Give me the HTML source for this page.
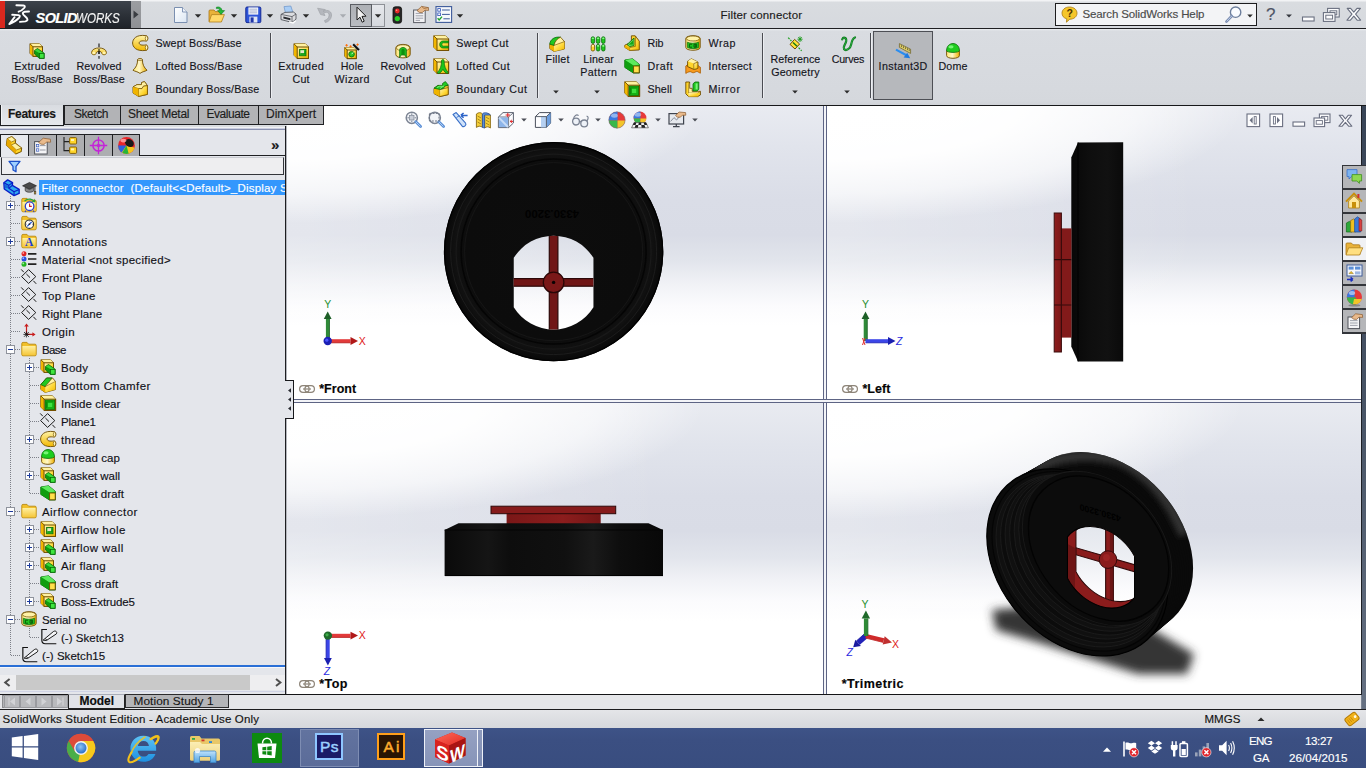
<!DOCTYPE html>
<html lang="en"><head><meta charset="utf-8"><title>Filter connector - SolidWorks</title>
<style>
html,body{margin:0;padding:0;}
body{width:1366px;height:768px;overflow:hidden;position:relative;background:#e3e5ea;font-family:"Liberation Sans",sans-serif;}
.r{position:absolute;display:block;}
.t{position:absolute;white-space:pre;-webkit-text-stroke:0.15px currentColor;font-family:"Liberation Sans",sans-serif;}
</style></head>
<body>
<div class="r" style="left:287px;top:106px;width:1074px;height:588px;background:#fff;"></div>
<div class="r" style="left:287px;top:106px;width:536px;height:293px;background:radial-gradient(ellipse 78% 40% at 0% 0%, #ffffff 0%, rgba(255,255,255,.97) 45%, rgba(255,255,255,.6) 75%, rgba(255,255,255,0) 100%),linear-gradient(to right, rgba(255,255,255,.3) 0%, rgba(255,255,255,.18) 35%, rgba(255,255,255,0) 70%),linear-gradient(to bottom,#e9ebf1 0%,#e1e4ec 14%,#dadde7 32%,#d9dce6 44%,#e2e5ec 53%,#f1f2f6 61%,#fbfbfd 68%,#ffffff 75%,#ffffff 100%);"></div>
<div class="r" style="left:827px;top:106px;width:534px;height:293px;background:radial-gradient(ellipse 78% 40% at 0% 0%, #ffffff 0%, rgba(255,255,255,.97) 45%, rgba(255,255,255,.6) 75%, rgba(255,255,255,0) 100%),linear-gradient(to right, rgba(255,255,255,.3) 0%, rgba(255,255,255,.18) 35%, rgba(255,255,255,0) 70%),linear-gradient(to bottom,#e9ebf1 0%,#e1e4ec 14%,#dadde7 32%,#d9dce6 44%,#e2e5ec 53%,#f1f2f6 61%,#fbfbfd 68%,#ffffff 75%,#ffffff 100%);"></div>
<div class="r" style="left:287px;top:403px;width:536px;height:291px;background:radial-gradient(ellipse 78% 40% at 0% 0%, #ffffff 0%, rgba(255,255,255,.97) 45%, rgba(255,255,255,.6) 75%, rgba(255,255,255,0) 100%),linear-gradient(to right, rgba(255,255,255,.3) 0%, rgba(255,255,255,.18) 35%, rgba(255,255,255,0) 70%),linear-gradient(to bottom,#e9ebf1 0%,#e1e4ec 14%,#dadde7 32%,#d9dce6 44%,#e2e5ec 53%,#f1f2f6 61%,#fbfbfd 68%,#ffffff 75%,#ffffff 100%);"></div>
<div class="r" style="left:827px;top:403px;width:534px;height:291px;background:radial-gradient(ellipse 78% 40% at 0% 0%, #ffffff 0%, rgba(255,255,255,.97) 45%, rgba(255,255,255,.6) 75%, rgba(255,255,255,0) 100%),linear-gradient(to right, rgba(255,255,255,.3) 0%, rgba(255,255,255,.18) 35%, rgba(255,255,255,0) 70%),linear-gradient(to bottom,#e9ebf1 0%,#e1e4ec 14%,#dadde7 32%,#d9dce6 44%,#e2e5ec 53%,#f1f2f6 61%,#fbfbfd 68%,#ffffff 75%,#ffffff 100%);"></div>
<div class="r" style="left:823px;top:106px;width:1px;height:588px;background:#5d6484;"></div>
<div class="r" style="left:824px;top:106px;width:2px;height:588px;background:#f3f4f8;"></div>
<div class="r" style="left:826px;top:106px;width:1px;height:588px;background:#5d6484;"></div>
<div class="r" style="left:287px;top:399px;width:1074px;height:1px;background:#5d6484;"></div>
<div class="r" style="left:287px;top:400px;width:1074px;height:2px;background:#f3f4f8;"></div>
<div class="r" style="left:287px;top:402px;width:1074px;height:1px;background:#5d6484;"></div>
<div class="r" style="left:824px;top:400px;width:2px;height:2px;background:#f3f4f8;"></div>
<svg class="r" style="left:287px;top:106px;" width="536" height="293" viewBox="287 106 536 293"><defs><clipPath id="fh"><path transform="translate(553.5 251.6)" d="M-39.85 6.27 A46.9 46.9 0 0 1 39.85 6.27 L39.85 55.73 A46.9 46.9 0 0 1 -39.85 55.73Z"/></clipPath><radialGradient id="fd" cx="50%" cy="50%" r="50%"><stop offset="0" stop-color="#0d0d0d"/><stop offset="0.8" stop-color="#0c0c0c"/><stop offset="0.9" stop-color="#111"/><stop offset="1" stop-color="#080808"/></radialGradient></defs><path transform="translate(553.6 251.6)" fill-rule="evenodd" fill="url(#fd)" d="M-109.7 0 A109.7 109.7 0 1 0 109.7 0 A109.7 109.7 0 1 0 -109.7 0Z M-39.85 6.27 A46.9 46.9 0 0 1 39.85 6.27 L39.85 55.73 A46.9 46.9 0 0 1 -39.85 55.73Z"/><circle cx="553.6" cy="251.6" r="109.10000000000001" fill="none" stroke="#000" stroke-width="1.2"/><circle cx="553.6" cy="251.6" r="103" fill="none" stroke="#1c1c1c" stroke-width="1"/><circle cx="553.6" cy="251.6" r="97.5" fill="none" stroke="#191919" stroke-width="1.3"/><circle cx="553.6" cy="251.6" r="92.5" fill="none" stroke="#050505" stroke-width="1.5"/><circle cx="553.6" cy="251.6" r="89" fill="none" stroke="#161616" stroke-width="1"/><g clip-path="url(#fh)"><rect x="549.3" y="230" width="8.6" height="105" fill="#701616" stroke="#2c0808" stroke-width="1.2"/><rect x="510" y="278.6" width="90" height="7.6" fill="#701616" stroke="#2c0808" stroke-width="1.2"/><rect x="549.9" y="279.2" width="7.4" height="6.4" fill="#701616"/></g><circle cx="553.6" cy="282.4" r="10.3" fill="#7a1818" stroke="#2a0707" stroke-width="1.3"/><circle cx="553.6" cy="282.4" r="1.7" fill="#0a0303"/><text x="0" y="0" transform="translate(552 213.2) rotate(180)" text-anchor="middle" dominant-baseline="middle" font-family="Liberation Sans, sans-serif" font-weight="bold" font-size="11.5" textLength="54" lengthAdjust="spacingAndGlyphs" fill="#010101">4330.3200</text></svg>
<svg class="r" style="left:827px;top:106px;" width="534" height="293" viewBox="827 106 534 293"><defs><linearGradient id="lb" x1="0" x2="1" y1="0" y2="0"><stop offset="0" stop-color="#070707"/><stop offset="0.35" stop-color="#0e0e0e"/><stop offset="0.7" stop-color="#111"/><stop offset="1" stop-color="#0a0a0a"/></linearGradient><linearGradient id="lr" x1="0" x2="1" y1="0" y2="0"><stop offset="0" stop-color="#8e1d1d"/><stop offset="1" stop-color="#7a1818"/></linearGradient></defs><path d="M1078 142.4 L1123.2 142.2 L1123.2 361.4 L1078 361.4 L1071.3 346.5 L1071.3 157.5Z" fill="url(#lb)"/><path d="M1078 142.4 L1078 361.4" stroke="#000" stroke-width="1"/><rect x="1061.4" y="228.4" width="10" height="109.2" fill="#821a1a"/><rect x="1054.2" y="213" width="7.2" height="139" fill="url(#lr)" stroke="#3a0c0c" stroke-width="1"/><path d="M1054 259.6 H1071.3 M1054 305 H1071.3" stroke="#330a0a" stroke-width="1.2"/><path d="M1061.4 228 V337.6" stroke="#3a0c0c" stroke-width="1"/></svg>
<svg class="r" style="left:287px;top:403px;" width="536" height="290" viewBox="287 403 536 290"><defs><linearGradient id="tb" x1="0" x2="1" y1="0" y2="0"><stop offset="0" stop-color="#0a0a0a"/><stop offset="0.2" stop-color="#151515"/><stop offset="0.3" stop-color="#0d0d0d"/><stop offset="0.55" stop-color="#101010"/><stop offset="0.68" stop-color="#1a1a1a"/><stop offset="0.8" stop-color="#0e0e0e"/><stop offset="1" stop-color="#080808"/></linearGradient><linearGradient id="tr" x1="0" x2="1" y1="0" y2="0"><stop offset="0" stop-color="#7a1717"/><stop offset="0.6" stop-color="#8c1d1d"/><stop offset="1" stop-color="#741616"/></linearGradient></defs><rect x="506.6" y="512" width="94.1" height="12" fill="url(#tr)"/><rect x="491" y="506.2" width="124.7" height="7.5" fill="#861b1b" stroke="#2e0909" stroke-width="1"/><path d="M458.5 523.2 L648.5 523.2 L663 530 L663 576 L444.6 576 L444.6 530Z" fill="url(#tb)"/><path d="M444.6 530 H663" stroke="#040404" stroke-width="1"/><path d="M445 575.6 H663" stroke="#000" stroke-width="1"/></svg>
<svg class="r" style="left:827px;top:403px;" width="534" height="290" viewBox="827 403 534 290"><defs><filter id="sh" x="-30%" y="-60%" width="160%" height="220%"><feGaussianBlur stdDeviation="5"/></filter><filter id="b3" x="-20%" y="-20%" width="140%" height="140%"><feGaussianBlur stdDeviation="3.2"/></filter><linearGradient id="seeg" gradientUnits="userSpaceOnUse" x1="0" y1="525" x2="0" y2="605"><stop offset="0" stop-color="#e3e6ed"/><stop offset="0.45" stop-color="#eef0f4"/><stop offset="0.8" stop-color="#fbfbfd"/><stop offset="1" stop-color="#ffffff"/></linearGradient><clipPath id="hc"><rect x="-39.85" y="-20" width="79.7" height="100"/></clipPath><clipPath id="bodyc"><circle cx="0" cy="0" r="109.70" transform="matrix(0.8250 0.2390 0 0.8190 1077.30 562.40)"/><circle cx="0" cy="0" r="109.43" transform="matrix(0.8250 0.2390 0 0.8190 1079.63 560.77)"/><circle cx="0" cy="0" r="109.15" transform="matrix(0.8250 0.2390 0 0.8190 1081.97 559.15)"/><circle cx="0" cy="0" r="108.88" transform="matrix(0.8250 0.2390 0 0.8190 1084.30 557.52)"/><circle cx="0" cy="0" r="108.60" transform="matrix(0.8250 0.2390 0 0.8190 1086.63 555.90)"/><circle cx="0" cy="0" r="108.33" transform="matrix(0.8250 0.2390 0 0.8190 1088.97 554.27)"/><circle cx="0" cy="0" r="108.05" transform="matrix(0.8250 0.2390 0 0.8190 1091.30 552.65)"/><circle cx="0" cy="0" r="107.78" transform="matrix(0.8250 0.2390 0 0.8190 1093.63 551.02)"/><circle cx="0" cy="0" r="107.51" transform="matrix(0.8250 0.2390 0 0.8190 1095.97 549.40)"/><circle cx="0" cy="0" r="107.23" transform="matrix(0.8250 0.2390 0 0.8190 1098.30 547.77)"/><circle cx="0" cy="0" r="106.96" transform="matrix(0.8250 0.2390 0 0.8190 1100.63 546.15)"/><circle cx="0" cy="0" r="106.68" transform="matrix(0.8250 0.2390 0 0.8190 1102.97 544.52)"/><circle cx="0" cy="0" r="106.41" transform="matrix(0.8250 0.2390 0 0.8190 1105.30 542.90)"/></clipPath><clipPath id="hole1"><path d="M-39.85 6.27 A46.9 46.9 0 0 1 39.85 6.27 L39.85 55.73 A46.9 46.9 0 0 1 -39.85 55.73Z" transform="matrix(0.8415 0.2438 0 0.8354 1101.00 541.40)"/></clipPath><clipPath id="hole2"><path d="M-39.85 6.27 A46.9 46.9 0 0 1 39.85 6.27 L39.85 55.73 A46.9 46.9 0 0 1 -39.85 55.73Z" transform="matrix(0.8415 0.2438 0 0.8354 1109.50 534.90)"/></clipPath></defs><g filter="url(#sh)"><path d="M992 610 L1050 605 L1150 628 L1194 654 L1187 674 L1138 674 L1040 643 L996 630Z" fill="#343434"/></g><circle cx="0" cy="0" r="106.409" transform="matrix(0.8250 0.2390 0 0.8190 1105.30 542.90)" fill="#0a0a0a" /><circle cx="0" cy="0" r="106.68325" transform="matrix(0.8250 0.2390 0 0.8190 1102.97 544.52)" fill="#0a0a0a" /><circle cx="0" cy="0" r="106.9575" transform="matrix(0.8250 0.2390 0 0.8190 1100.63 546.15)" fill="#0a0a0a" /><circle cx="0" cy="0" r="107.23175" transform="matrix(0.8250 0.2390 0 0.8190 1098.30 547.77)" fill="#0a0a0a" /><circle cx="0" cy="0" r="107.506" transform="matrix(0.8250 0.2390 0 0.8190 1095.97 549.40)" fill="#0a0a0a" /><circle cx="0" cy="0" r="107.78025000000001" transform="matrix(0.8250 0.2390 0 0.8190 1093.63 551.02)" fill="#0a0a0a" /><circle cx="0" cy="0" r="108.0545" transform="matrix(0.8250 0.2390 0 0.8190 1091.30 552.65)" fill="#0a0a0a" /><circle cx="0" cy="0" r="108.32875000000001" transform="matrix(0.8250 0.2390 0 0.8190 1088.97 554.27)" fill="#0a0a0a" /><circle cx="0" cy="0" r="108.60300000000001" transform="matrix(0.8250 0.2390 0 0.8190 1086.63 555.90)" fill="#0a0a0a" /><circle cx="0" cy="0" r="108.87725" transform="matrix(0.8250 0.2390 0 0.8190 1084.30 557.52)" fill="#0a0a0a" /><circle cx="0" cy="0" r="109.1515" transform="matrix(0.8250 0.2390 0 0.8190 1081.97 559.15)" fill="#0a0a0a" /><circle cx="0" cy="0" r="109.42575000000001" transform="matrix(0.8250 0.2390 0 0.8190 1079.63 560.77)" fill="#0a0a0a" /><circle cx="0" cy="0" r="109.7" transform="matrix(0.8250 0.2390 0 0.8190 1077.30 562.40)" fill="#0a0a0a" /><g clip-path="url(#bodyc)"><g filter="url(#b3)"><path d="M1035 468 Q1075 448 1120 461 Q1162 480 1184 535" fill="none" stroke="#343434" stroke-width="10"/></g></g><circle cx="0" cy="0" r="109.7" transform="matrix(0.8250 0.2390 0 0.8190 1077.30 562.40)" fill="#0b0b0b" stroke="#000" stroke-width="1.4"/><circle cx="0" cy="0" r="105.2" transform="matrix(0.8250 0.2390 0 0.8190 1078.80 561.30)" fill="#0d0d0d" stroke="#050505" stroke-width="1.2"/><circle cx="0" cy="0" r="100.9" transform="matrix(0.8250 0.2390 0 0.8190 1079.30 560.90)" fill="#101010" stroke="#1d1d1d" stroke-width="1"/><circle cx="0" cy="0" r="98.56" transform="matrix(0.8250 0.2390 0 0.8190 1081.90 558.95)" fill="#0c0c0c" stroke="#1d1d1d" stroke-width="1"/><circle cx="0" cy="0" r="96.22" transform="matrix(0.8250 0.2390 0 0.8190 1084.50 557.00)" fill="#101010" stroke="#1d1d1d" stroke-width="1"/><circle cx="0" cy="0" r="93.88" transform="matrix(0.8250 0.2390 0 0.8190 1087.10 555.05)" fill="#0c0c0c" stroke="#1d1d1d" stroke-width="1"/><circle cx="0" cy="0" r="91.54" transform="matrix(0.8250 0.2390 0 0.8190 1089.70 553.10)" fill="#101010" stroke="#1d1d1d" stroke-width="1"/><circle cx="0" cy="0" r="89.2" transform="matrix(0.8250 0.2390 0 0.8190 1092.30 551.15)" fill="#0c0c0c" stroke="#1d1d1d" stroke-width="1"/><circle cx="0" cy="0" r="90.5" transform="matrix(0.8250 0.2390 0 0.8190 1097.00 548.50)" fill="#0b0b0b" stroke="#191919" stroke-width="1.2"/><circle cx="0" cy="0" r="85" transform="matrix(0.8250 0.2390 0 0.8190 1098.60 548.60)" fill="#0c0c0c" stroke="#030303" stroke-width="1.6"/><g transform="matrix(0.8250 0.2390 0 0.8190 1098.60 548.60)"><text transform="translate(2 -45) rotate(180)" text-anchor="middle" dominant-baseline="middle" font-family="Liberation Sans, sans-serif" font-weight="bold" font-size="11" textLength="50" lengthAdjust="spacingAndGlyphs" fill="#000">4330.3200</text></g><g clip-path="url(#hole1)"><rect x="1050" y="510" width="110" height="110" fill="#8b1c1c"/><path d="M1060 540 L1075 548 L1075 590 L1062 585Z" fill="#6e1515"/><g clip-path="url(#hole2)"><rect x="1050" y="510" width="110" height="110" fill="url(#seeg)"/><g transform="matrix(0.8415 0.2438 0 0.8354 1109.50 534.90)"><rect x="-4.6" y="-20" width="9.2" height="100" fill="#8a1c1c" stroke="#330a0a" stroke-width="1.3"/><rect x="-45" y="27" width="90" height="8.4" fill="#8a1c1c" stroke="#330a0a" stroke-width="1.3"/><rect x="-3.9" y="27.7" width="7.8" height="7" fill="#8a1c1c"/><rect x="0.5" y="-20" width="4.1" height="100" fill="#5e1212" opacity="0.7"/></g></g><path d="M-39.85 6.27 A46.9 46.9 0 0 1 39.85 6.27 L39.85 55.73 A46.9 46.9 0 0 1 -39.85 55.73Z" transform="matrix(0.8415 0.2438 0 0.8354 1109.50 534.90)" fill="none" stroke="#2b0808" stroke-width="1.2"/></g><path d="M-39.85 6.27 A46.9 46.9 0 0 1 39.85 6.27 L39.85 55.73 A46.9 46.9 0 0 1 -39.85 55.73Z" transform="matrix(0.8415 0.2438 0 0.8354 1101.00 541.40)" fill="none" stroke="#000" stroke-width="1.2"/><circle cx="1108" cy="559.6" r="8.8" fill="#8a1c1c" stroke="#360a0a" stroke-width="1"/><circle cx="1106.5" cy="557.5" r="3.4" fill="#9c2424"/></svg>
<svg class="r" style="left:315px;top:296px;" width="56" height="56" viewBox="315 296 56 56"><path d="M327.7 341.0 L327.7 319.0" stroke="#2f8a38" stroke-width="3.6"/><path d="M329.5 341.0 L329.5 319.0" stroke="#1d5f27" stroke-width="0.8" fill="none"/><path d="M327.7 311.5 L331.6 319.0 L323.8 319.0Z" fill="#1d5f27"/><path d="M327.7 341.0 L350.5 341.0" stroke="#e23a3a" stroke-width="3.6"/><path d="M327.7 342.8 L350.5 342.8" stroke="#b01818" stroke-width="0.8" fill="none"/><path d="M358.0 341.0 L350.5 344.9 L350.5 337.1Z" fill="#b01818"/><circle cx="327.7" cy="341" r="4.2" fill="#1b1fb4"/><circle cx="326.8" cy="340.2" r="1.6" fill="#4a55ff"/><text x="327.7" y="308.2" text-anchor="middle" font-family="Liberation Sans, sans-serif" font-size="10.5" fill="#1f8f2f">Y</text><text x="362.2" y="344.8" text-anchor="middle" font-family="Liberation Sans, sans-serif" font-size="10.5" fill="#e02020">X</text></svg>
<svg class="r" style="left:853px;top:296px;" width="56" height="56" viewBox="853 296 56 56"><path d="M865.5 341.0 L865.5 319.0" stroke="#2f8a38" stroke-width="3.6"/><path d="M867.3 341.0 L867.3 319.0" stroke="#1d5f27" stroke-width="0.8" fill="none"/><path d="M865.5 311.5 L869.4 319.0 L861.6 319.0Z" fill="#1d5f27"/><path d="M865.5 341.0 L888.0 341.0" stroke="#3b46e8" stroke-width="3.6"/><path d="M865.5 342.8 L888.0 342.8" stroke="#1a1fb0" stroke-width="0.8" fill="none"/><path d="M895.5 341.0 L888.0 344.9 L888.0 337.1Z" fill="#1a1fb0"/><path d="M862.5 338 L865 345 M865 338 L862.5 345" stroke="#e03030" stroke-width="1"/><text x="865.5" y="308.2" text-anchor="middle" font-family="Liberation Sans, sans-serif" font-size="10.5" fill="#1f8f2f">Y</text><text x="899.3" y="344.8" text-anchor="middle" font-family="Liberation Sans, sans-serif" font-size="10.5" font-style="italic" fill="#2a2ae0">Z</text></svg>
<svg class="r" style="left:315px;top:624px;" width="56" height="56" viewBox="315 624 56 56"><path d="M327.9 635.6 L327.9 658.0" stroke="#3b46e8" stroke-width="3.6"/><path d="M326.1 635.6 L326.1 658.0" stroke="#1a1fb0" stroke-width="0.8" fill="none"/><path d="M327.9 665.5 L324.0 658.0 L331.8 658.0Z" fill="#1a1fb0"/><path d="M327.9 635.6 L350.5 635.6" stroke="#e23a3a" stroke-width="3.6"/><path d="M327.9 637.4 L350.5 637.4" stroke="#b01818" stroke-width="0.8" fill="none"/><path d="M358.0 635.6 L350.5 639.5 L350.5 631.7Z" fill="#b01818"/><circle cx="327.9" cy="635.6" r="4.2" fill="#1f6a2a"/><circle cx="327" cy="634.8" r="1.6" fill="#3fae4a"/><text x="326.9" y="674.5" text-anchor="middle" font-family="Liberation Sans, sans-serif" font-size="10.5" font-style="italic" fill="#2a2ae0">Z</text><text x="362.2" y="639.4" text-anchor="middle" font-family="Liberation Sans, sans-serif" font-size="10.5" fill="#e02020">X</text></svg>
<svg class="r" style="left:840px;top:594px;" width="66" height="68" viewBox="840 594 66 68"><path d="M865.9 636.0 L858.1 642.9" stroke="#2323b8" stroke-width="5.2"/><path d="M864.2 634.0 L856.4 641.0" stroke="#1a1aa0" stroke-width="0.8" fill="none"/><path d="M853.2 647.2 L855.3 639.8 L860.9 646.1Z" fill="#1a1aa0"/><path d="M865.9 636.0 L883.7 640.4" stroke="#cf2a2a" stroke-width="4.2"/><path d="M865.4 638.0 L883.2 642.4" stroke="#c03030" stroke-width="0.8" fill="none"/><path d="M892.0 642.4 L882.7 644.5 L884.7 636.3Z" fill="#c03030"/><path d="M865.9 636.0 L865.9 618.5" stroke="#2e8a36" stroke-width="4.0"/><path d="M867.9 636.0 L867.9 618.5" stroke="#1f6a2a" stroke-width="0.8" fill="none"/><path d="M865.9 610.5 L870.1 618.5 L861.7 618.5Z" fill="#1f6a2a"/><text x="865" y="608" text-anchor="middle" font-family="Liberation Sans, sans-serif" font-size="10.5" fill="#1f8f2f">Y</text><text x="895.5" y="647.8" text-anchor="middle" font-family="Liberation Sans, sans-serif" font-size="10.5" fill="#e02020">X</text><text x="849.6" y="656.2" text-anchor="middle" font-family="Liberation Sans, sans-serif" font-size="10.5" font-style="italic" fill="#2a2ae0">Z</text></svg>
<svg class="r" style="left:299px;top:385px;" width="16" height="8" viewBox="0 0 16 8"><rect x="0.6" y="0.6" width="9.5" height="6.8" rx="3.4" fill="#fff" stroke="#8d8478" stroke-width="1.2"/><rect x="5.9" y="0.6" width="9.5" height="6.8" rx="3.4" fill="none" stroke="#8d8478" stroke-width="1.2"/><path d="M4 4h8" stroke="#8d8478" stroke-width="1.2"/></svg>
<svg class="r" style="left:842px;top:385px;" width="16" height="8" viewBox="0 0 16 8"><rect x="0.6" y="0.6" width="9.5" height="6.8" rx="3.4" fill="#fff" stroke="#8d8478" stroke-width="1.2"/><rect x="5.9" y="0.6" width="9.5" height="6.8" rx="3.4" fill="none" stroke="#8d8478" stroke-width="1.2"/><path d="M4 4h8" stroke="#8d8478" stroke-width="1.2"/></svg>
<svg class="r" style="left:299px;top:680px;" width="16" height="8" viewBox="0 0 16 8"><rect x="0.6" y="0.6" width="9.5" height="6.8" rx="3.4" fill="#fff" stroke="#8d8478" stroke-width="1.2"/><rect x="5.9" y="0.6" width="9.5" height="6.8" rx="3.4" fill="none" stroke="#8d8478" stroke-width="1.2"/><path d="M4 4h8" stroke="#8d8478" stroke-width="1.2"/></svg>
<div class="t" style="left:319.20px;top:381.25px;font-size:12.5px;line-height:16.5px;color:#050505;letter-spacing:0.037px;font-weight:bold;">*Front</div>
<div class="t" style="left:862.40px;top:381.25px;font-size:12.5px;line-height:16.5px;color:#050505;letter-spacing:0.079px;font-weight:bold;">*Left</div>
<div class="t" style="left:319.20px;top:676.35px;font-size:12.5px;line-height:16.5px;color:#050505;letter-spacing:0.482px;font-weight:bold;">*Top</div>
<div class="t" style="left:841.80px;top:676.15px;font-size:12.5px;line-height:16.5px;color:#050505;letter-spacing:0.437px;font-weight:bold;">*Trimetric</div>
<div class="r" style="left:0px;top:0px;width:1366px;height:28px;background:linear-gradient(#f2f3f5 0,#f2f3f5 1px,#d9dce0 2px,#d6d9de 100%);"></div>
<div class="r" style="left:0px;top:28px;width:1366px;height:1px;background:#1e1f22;"></div>
<div class="r" style="left:0px;top:29px;width:1366px;height:76px;background:linear-gradient(#eceef1 0,#d9dce1 2px,#d6d9de 60px,#d5d8dd 72px,#d0d3d8 76px);"></div>
<div class="r" style="left:0px;top:1px;width:5px;height:27px;background:#d9281e;"></div>
<div class="r" style="left:5px;top:1px;width:126px;height:27px;background:linear-gradient(#3d434b,#2b3037 55%,#1f2329);"></div>
<div class="r" style="left:131px;top:1px;width:10px;height:27px;background:linear-gradient(#9b9da1,#8f9195);"></div>
<svg class="r" style="left:131px;top:1px;" width="10" height="27" viewBox="0 0 10 27"><path d="M2.5 9.5 L7.5 13.5 L2.5 17.5Z" fill="#3a3d42"/></svg>
<svg class="r" style="left:0px;top:0px;" width="30" height="30" viewBox="0 0 30 30"><g fill="none" stroke="#fff" stroke-width="1.9" stroke-linecap="round" stroke-linejoin="round"><path d="M16.4 5.3 L23.4 5.5 Q25.8 5.9 24.2 8 Q22 10.6 18.6 11.7"/><path d="M14.6 17.2 L9.3 24 Q15.8 21.4 19.2 17.6 Q20.8 15.4 18.4 15.1 L12.2 14.8"/><path d="M29 11.5 L24.8 11.8 Q21.6 12.5 23.6 14.8 L26.8 18 Q28.6 20.7 25.4 21.4 L20 21.9"/></g></svg>
<div class="t" style="left:35.60px;top:8.55px;font-size:14.5px;line-height:18.5px;color:#fff;font-style:italic;"><span style="font-weight:bold;letter-spacing:-0.623px;">SOLID</span><span style="display:inline-block;transform:scaleX(0.800);transform-origin:0 50%;color:#f4f4f4;margin-left:-0.40px;">WORKS</span></div>
<div class="t" style="left:720.55px;top:8.25px;font-size:11.5px;line-height:15.5px;color:#1b1b1b;letter-spacing:0.151px;">Filter connector</div>
<div class="r" style="left:1055px;top:3px;width:202px;height:23px;background:#f3f4f6;box-sizing:border-box;border:1px solid #1d1d1f;"></div>
<div class="t" style="left:1082.40px;top:7.45px;font-size:11.5px;line-height:15.5px;color:#4a4a4a;letter-spacing:-0.111px;">Search SolidWorks Help</div>
<div class="r" style="left:286px;top:105px;width:1080px;height:1px;background:#17181a;"></div>
<div class="r" style="left:0px;top:105px;width:286px;height:22px;background:#d9dce0;"></div>
<div class="r" style="left:64px;top:105px;width:57px;height:20px;background:#b2b3b6;box-sizing:border-box;border:1px solid #1f2023;"></div>
<div class="r" style="left:120px;top:105px;width:79px;height:20px;background:#b2b3b6;box-sizing:border-box;border:1px solid #1f2023;"></div>
<div class="r" style="left:198px;top:105px;width:61px;height:20px;background:#b2b3b6;box-sizing:border-box;border:1px solid #1f2023;"></div>
<div class="r" style="left:258px;top:105px;width:66px;height:20px;background:#b2b3b6;box-sizing:border-box;border:1px solid #1f2023;"></div>
<div class="r" style="left:0px;top:105px;width:64px;height:21px;background:linear-gradient(#d9dce1,#e6e8ec);box-sizing:border-box;border-right:1px solid #1f2023;border-bottom:1px solid #1f2023;border-left:1px solid #1f2023;"></div>
<div class="r" style="left:1px;top:105px;width:1px;height:20px;background:#f4f5f7;"></div>
<div class="t" style="left:8.00px;top:106.00px;font-size:12px;line-height:16px;color:#161616;letter-spacing:-0.288px;font-weight:bold;">Features</div>
<div class="t" style="left:74.00px;top:106.00px;font-size:12px;line-height:16px;color:#1c1c1c;letter-spacing:-0.441px;">Sketch</div>
<div class="t" style="left:128.00px;top:106.00px;font-size:12px;line-height:16px;color:#1c1c1c;letter-spacing:-0.253px;">Sheet Metal</div>
<div class="t" style="left:206.50px;top:106.00px;font-size:12px;line-height:16px;color:#1c1c1c;letter-spacing:-0.455px;">Evaluate</div>
<div class="t" style="left:266.00px;top:106.00px;font-size:12px;line-height:16px;color:#1c1c1c;">DimXpert</div>
<div class="r" style="left:0px;top:127px;width:285px;height:567px;background:#e4e6eb;"></div>
<div class="r" style="left:0px;top:127px;width:285px;height:1px;background:#f1f2f5;"></div>
<div class="r" style="left:0px;top:128px;width:285px;height:1px;background:#c9cde0;"></div>
<div class="r" style="left:0px;top:129px;width:285px;height:1px;background:#8a91b0;"></div>
<div class="r" style="left:285px;top:126px;width:1px;height:569px;background:#1d1e21;"></div>
<div class="r" style="left:286px;top:126px;width:1px;height:568px;background:#b4b6bc;"></div>
<div class="r" style="left:0px;top:694px;width:1362px;height:1px;background:#141416;"></div>
<div class="r" style="left:0px;top:695px;width:1366px;height:14px;background:#e5e6e9;"></div>
<div class="r" style="left:0px;top:709px;width:1366px;height:1px;background:#1c1c1e;"></div>
<div class="r" style="left:0px;top:710px;width:1366px;height:18px;background:linear-gradient(#e4e5e8,#d6d8dc);"></div>
<div class="t" style="left:2.60px;top:712.05px;font-size:11.5px;line-height:15.5px;color:#141414;letter-spacing:0.148px;">SolidWorks Student Edition - Academic Use Only</div>
<div class="t" style="left:1204.40px;top:712.05px;font-size:11.5px;line-height:15.5px;color:#141414;letter-spacing:0.114px;">MMGS</div>
<svg class="r" style="left:1255px;top:714px;" width="12" height="10" viewBox="0 0 12 10"><path d="M2.5 7 L6 3.5 L9.5 7Z" fill="#2a2a2a"/></svg>
<svg class="r" style="left:1343px;top:710px;" width="18" height="18" viewBox="0 0 18 18"><g transform="rotate(-38 9 9)"><rect x="2.5" y="4.5" width="13" height="9" rx="2.2" fill="#f2b31a" stroke="#b47a06" stroke-width="1"/><circle cx="13" cy="9" r="1.4" fill="#fff8e0"/><path d="M5 6.5v5M7 6.5v5M9 6.5v5" stroke="#c88a0a" stroke-width="0.9"/></g></svg>
<div class="r" style="left:2px;top:695px;width:66px;height:13px;background:#b3b4b7;box-sizing:border-box;border:1px solid #8c8d90;"></div>
<svg class="r" style="left:2px;top:695px;" width="66" height="13" viewBox="0 0 66 13"><rect x="2.5" y="0.5" width="15" height="12" fill="#b9babd" stroke="#9a9b9f" stroke-width="1"/><path d="M7 2.5v8" stroke="#d2d3d6" stroke-width="1.2"/><path d="M13 2.5 L8 6.5 L13 10.5Z" fill="#d2d3d6"/><rect x="18.5" y="0.5" width="15" height="12" fill="#b9babd" stroke="#9a9b9f" stroke-width="1"/><path d="M28.5 2.5 L23.5 6.5 L28.5 10.5Z" fill="#d2d3d6"/><rect x="34.5" y="0.5" width="15" height="12" fill="#b9babd" stroke="#9a9b9f" stroke-width="1"/><path d="M39.5 2.5 L44.5 6.5 L39.5 10.5Z" fill="#d2d3d6"/><rect x="50.5" y="0.5" width="15" height="12" fill="#b9babd" stroke="#9a9b9f" stroke-width="1"/><path d="M61 2.5v8" stroke="#d2d3d6" stroke-width="1.2"/><path d="M55 2.5 L60 6.5 L55 10.5Z" fill="#d2d3d6"/></svg>
<div class="r" style="left:68px;top:694px;width:57px;height:15px;background:#e1e3e8;box-sizing:border-box;border-left:1px solid #222;border-right:1px solid #222;border-bottom:1px solid #222;border-top:1px solid #a9adb8;"></div>
<div class="t" style="left:79.50px;top:693.20px;font-size:12px;line-height:16px;color:#0d0d0d;letter-spacing:-0.047px;font-weight:bold;">Model</div>
<div class="r" style="left:125px;top:694px;width:104px;height:14px;background:#b4b5b8;box-sizing:border-box;border:1px solid #2b2b2d;"></div>
<div class="t" style="left:133.50px;top:693.90px;font-size:11.8px;line-height:15.8px;color:#161616;letter-spacing:0.098px;">Motion Study 1</div>
<svg class="r" width="0" height="0" style="left:0;top:0"><defs><linearGradient id="gy" x1="0" y1="0" x2="1" y2="1"><stop offset="0" stop-color="#fff6c0"/><stop offset="0.55" stop-color="#ffd93a"/><stop offset="1" stop-color="#f0b400"/></linearGradient><linearGradient id="gyv" x1="0" y1="0" x2="0" y2="1"><stop offset="0" stop-color="#fff3a8"/><stop offset="1" stop-color="#f2b800"/></linearGradient><linearGradient id="gyh" x1="0" y1="0" x2="1" y2="0"><stop offset="0" stop-color="#ffe873"/><stop offset="0.45" stop-color="#fff7c8"/><stop offset="1" stop-color="#eeb000"/></linearGradient><linearGradient id="gg" x1="0" y1="0" x2="1" y2="1"><stop offset="0" stop-color="#6cf06c"/><stop offset="1" stop-color="#12a812"/></linearGradient><linearGradient id="gfold" x1="0" y1="0" x2="0" y2="1"><stop offset="0" stop-color="#fff0a0"/><stop offset="1" stop-color="#f5c63a"/></linearGradient></defs></svg>
<svg class="r" style="left:173px;top:6px;" width="16" height="18" viewBox="0 0 16 18"><defs><linearGradient id="qn" x1="0" y1="0" x2="1" y2="1"><stop offset="0" stop-color="#fff"/><stop offset="1" stop-color="#dbe6f3"/></linearGradient></defs><path d="M1.5 1.5 H9.5 L14 6 V16.5 H1.5Z" fill="url(#qn)" stroke="#7a8fb0" stroke-width="1"/><path d="M9.5 1.5 V6 H14" fill="#eef3fa" stroke="#7a8fb0" stroke-width="0.9"/></svg>
<svg class="r" style="left:194px;top:13px;" width="8" height="6" viewBox="0 0 8 6"><path d="M0.7999999999999998 1.2 H7.2 L4 4.8Z" fill="#2b2b2b"/></svg>
<svg class="r" style="left:208px;top:5px;" width="18" height="19" viewBox="0 0 18 19"><path d="M1 6 Q1 5 2 5 H6 L7.4 6.6 H12.4 Q13.2 6.6 13.2 7.6 V16.4 H1Z" fill="#e9b23a" stroke="#a8761a" stroke-width="0.8"/><path d="M1 17 L3.6 9.6 H16.4 L13.4 17Z" fill="#ffd86a" stroke="#b07f1a" stroke-width="0.8" stroke-linejoin="round"/><path d="M8.4 2.2 C11.4 1.4 13.6 2.6 14 5.6 H16.6 L13 9.4 L9.6 5.6 H11.8 C11.6 4 10.4 3.4 8.4 3.6Z" fill="#22b838" stroke="#0d7a22" stroke-width="0.6"/></svg>
<svg class="r" style="left:230px;top:13px;" width="8" height="6" viewBox="0 0 8 6"><path d="M0.7999999999999998 1.2 H7.2 L4 4.8Z" fill="#2b2b2b"/></svg>
<svg class="r" style="left:245px;top:6px;" width="17" height="18" viewBox="0 0 17 18"><rect x="0.8" y="1" width="15" height="15.6" rx="1.2" fill="#2e55d8" stroke="#142a96" stroke-width="1"/><rect x="3.4" y="1.4" width="9.8" height="7.2" fill="#f4f6fb"/><path d="M4.4 3.2 H12.2 M4.4 5 H12.2 M4.4 6.8 H12.2" stroke="#9aa6c8" stroke-width="0.8"/><rect x="4.4" y="10.6" width="8" height="6" fill="#dfe5f5"/><rect x="5.6" y="11.4" width="3" height="5" fill="#2036a8"/></svg>
<svg class="r" style="left:266px;top:13px;" width="8" height="6" viewBox="0 0 8 6"><path d="M0.7999999999999998 1.2 H7.2 L4 4.8Z" fill="#2b2b2b"/></svg>
<svg class="r" style="left:280px;top:5px;" width="17" height="19" viewBox="0 0 17 19"><path d="M4 1.6 L10.8 1 L13 7.6 L5.6 8.6Z" fill="#a9cdf5" stroke="#6b93c9" stroke-width="0.7"/><path d="M1 9.4 L5 7.4 L13.4 7 L16 9 V14.2 L12 17.4 L1 14.6Z" fill="#dcdde0" stroke="#55585e" stroke-width="0.9" stroke-linejoin="round"/><path d="M1 9.4 L12 11.6 L16 9 M12 11.6 V17.4" stroke="#55585e" stroke-width="0.8" fill="none"/><path d="M3.4 11.6 L10.4 13.2 V15.2 L3.4 13.6Z" fill="#2b2d31"/><path d="M9 16.8 L13 18 L15.6 15.8" stroke="#fff" stroke-width="1.4" fill="none"/></svg>
<svg class="r" style="left:302px;top:13px;" width="8" height="6" viewBox="0 0 8 6"><path d="M0.7999999999999998 1.2 H7.2 L4 4.8Z" fill="#2b2b2b"/></svg>
<svg class="r" style="left:316px;top:5px;" width="18" height="19" viewBox="0 0 18 19"><path d="M4.6 9.6 L1.6 3.2 L9.4 4.6 L7 6.4 C11.6 3.8 16.6 6.4 15.4 11.6 C14.8 14.6 12.4 16.8 9.4 17.6 L8.4 15.6 C11.2 14.6 12.8 13 13 10.8 C13.4 7.6 10.6 6.4 7.8 8.2 L9 10.6Z" fill="#b4b7bd" stroke="#9a9da3" stroke-width="0.6" stroke-linejoin="round"/></svg>
<svg class="r" style="left:339px;top:13px;" width="8" height="6" viewBox="0 0 8 6"><path d="M0.7999999999999998 1.2 H7.2 L4 4.8Z" fill="#a9acb2"/></svg>
<div class="r" style="left:350px;top:4px;width:22px;height:23px;background:linear-gradient(#aeb1b6,#b9bcc1);box-sizing:border-box;border:1px solid #5a5d63;"></div>
<div class="r" style="left:372px;top:4px;width:13px;height:23px;background:linear-gradient(#e6e8ec,#d6d9de);box-sizing:border-box;border:1px solid #8e9197;border-left:none;"></div>
<svg class="r" style="left:355px;top:6px;" width="12" height="18" viewBox="0 0 12 18"><path d="M2 1.2 L2 14 L5 11.2 L7.2 16.2 L9.2 15.2 L7 10.4 L11 10.2Z" fill="#f2f2f2" stroke="#1a1a1a" stroke-width="1" stroke-linejoin="round"/></svg>
<svg class="r" style="left:374px;top:13px;" width="8" height="6" viewBox="0 0 8 6"><path d="M0.7999999999999998 1.2 H7.2 L4 4.8Z" fill="#2b2b2b"/></svg>
<svg class="r" style="left:392px;top:6px;" width="11" height="18" viewBox="0 0 11 18"><rect x="1" y="0.8" width="8.6" height="16.4" rx="2.4" fill="#262626" stroke="#0d0d0d" stroke-width="0.8"/><circle cx="5.3" cy="5" r="2.4" fill="#e82828"/><circle cx="5.3" cy="12.6" r="2.6" fill="#2ad02a"/><circle cx="4.6" cy="4.2" r="0.8" fill="#ff9a9a"/></svg>
<svg class="r" style="left:412px;top:5px;" width="18" height="19" viewBox="0 0 18 19"><rect x="1.6" y="5" width="11.6" height="12.6" fill="#f1f1f4" stroke="#5b5e66" stroke-width="1"/><path d="M3.6 8.4 H11.2 M3.6 10.8 H11.2 M3.6 13.2 H11.2 M3.6 15.4 H8" stroke="#8c8f99" stroke-width="0.8"/><path d="M5 5.6 L9.6 1.4 L16.4 2.6 L16.6 5.4 L13 5.2 L10.2 7.6 L7.4 7.4Z" fill="#e8b98a" stroke="#8a5a2e" stroke-width="0.7" stroke-linejoin="round"/><path d="M9.6 1.4 L12 3.6 L16.4 2.6" stroke="#8a5a2e" stroke-width="0.6" fill="none"/></svg>
<svg class="r" style="left:435px;top:5px;" width="18" height="19" viewBox="0 0 18 19"><rect x="1" y="1.6" width="15.6" height="15.8" fill="#f6f8fc" stroke="#3d5a9a" stroke-width="1.1"/><rect x="2.8" y="3.6" width="2.6" height="2.6" fill="none" stroke="#2c52b8" stroke-width="0.8"/><rect x="2.8" y="8" width="2.6" height="2.6" fill="none" stroke="#2c52b8" stroke-width="0.8"/><path d="M7 5 H14.8 M7 9.4 H14.8 M8.4 13.8 H14.8" stroke="#3d5a9a" stroke-width="1"/><path d="M2.6 13.2 L4.2 15 L7 11.6" stroke="#1ea32e" stroke-width="1.4" fill="none"/></svg>
<svg class="r" style="left:456px;top:13px;" width="8" height="6" viewBox="0 0 8 6"><path d="M0.7999999999999998 1.2 H7.2 L4 4.8Z" fill="#2b2b2b"/></svg>
<svg class="r" style="left:1061px;top:6px;" width="17" height="17" viewBox="0 0 17 17"><path d="M8.4 1 C13 1 16 3.8 16 7.2 C16 10.6 13 13.2 8.8 13.2 L5.4 16.2 L5.8 12.8 C2.6 12 1 9.8 1 7.2 C1 3.8 4 1 8.4 1Z" fill="#f5c62a" stroke="#a87a10" stroke-width="0.8"/><text x="8.6" y="11" text-anchor="middle" font-family="Liberation Sans, sans-serif" font-weight="bold" font-size="10.5" fill="#4a3200">?</text></svg>
<svg class="r" style="left:1224px;top:5px;" width="20" height="19" viewBox="0 0 20 19"><circle cx="11.6" cy="7.2" r="5.2" fill="#fafcff" stroke="#6d7f9c" stroke-width="1.4"/><path d="M7.8 11 L2.4 16.6" stroke="#7b8db0" stroke-width="2.6" stroke-linecap="round"/><path d="M7.8 11 L3 16" stroke="#c2d2ee" stroke-width="0.9" stroke-linecap="round"/></svg>
<svg class="r" style="left:1246px;top:13px;" width="8" height="6" viewBox="0 0 8 6"><path d="M1.2000000000000002 1.4 H6.8 L4 4.6Z" fill="#2b2b2b"/></svg>
<div class="t" style="left:1266.00px;top:4.30px;font-size:17px;line-height:21px;color:#4e5566;font-weight:normal;">?</div>
<svg class="r" style="left:1285px;top:13px;" width="8" height="6" viewBox="0 0 8 6"><path d="M1.1 1.4 H6.9 L4 4.6Z" fill="#33363d"/></svg>
<svg class="r" style="left:1301px;top:11px;" width="15" height="11" viewBox="0 0 15 11"><rect x="1.5" y="6" width="11.6" height="4" fill="#fdfdfe" stroke="#6a7080" stroke-width="1.1"/></svg>
<svg class="r" style="left:1322px;top:7px;" width="19" height="16" viewBox="0 0 19 16"><rect x="5.6" y="1.4" width="11.6" height="8.6" fill="#fdfdfe" stroke="#6a7080" stroke-width="1.1"/><rect x="8" y="3.8" width="6.8" height="4" fill="none" stroke="#6a7080" stroke-width="1"/><rect x="1.4" y="5.6" width="11.6" height="8.8" fill="#fdfdfe" stroke="#6a7080" stroke-width="1.1"/><rect x="3.8" y="8.2" width="6.8" height="3.8" fill="none" stroke="#6a7080" stroke-width="1"/></svg>
<svg class="r" style="left:1346px;top:7px;" width="16" height="15" viewBox="0 0 16 15"><path d="M1.2 1.4 H4.6 L7.8 5.2 L11 1.4 H14.4 L9.6 7.2 L14.6 13.2 H11.2 L7.8 9.2 L4.4 13.2 H1 L6 7.2Z" fill="#fdfdfe" stroke="#6a7080" stroke-width="1.1" stroke-linejoin="round"/></svg>
<svg class="r" style="left:29px;top:43px;overflow:visible;" width="16" height="16" viewBox="0 0 16 16"><path d="M1 0.8 H10.5 L13.5 3.8 V13.3 H4 L1 10.3Z" fill="#ffd52a" stroke="#6e4c00" stroke-width="1" stroke-linejoin="round"/><path d="M1 0.8 H10.5 L13.5 3.8 H4Z" fill="#fff1a0"/><path d="M1 0.8 L4 3.8 V13.3 L1 10.3Z" fill="#f2b600"/><rect x="4" y="3.8" width="9.5" height="9.5" fill="url(#gy)" stroke="#6e4c00" stroke-width="1"/><path d="M1 0.8 L4 3.8" stroke="#6e4c00" stroke-width="0.9"/><path d="M5.5 7.5 L8.5 5.5 L15.2 10.2 V15.5 H10.5 L5.5 11Z" fill="#0f9a0f" stroke="#0a6a0a" stroke-width="0.8" stroke-linejoin="round"/><path d="M5.8 7.6 L8.5 5.9 L14.6 10.2 L11 10.6Z" fill="#38d838"/><rect x="10.6" y="10.6" width="4.4" height="4.6" fill="#3fe63f" stroke="#0a6a0a" stroke-width="0.7"/></svg>
<div class="t" style="left:14.30px;top:59.25px;font-size:10.7px;line-height:14.7px;color:#15151c;letter-spacing:0.365px;">Extruded</div>
<div class="t" style="left:11.30px;top:71.85px;font-size:10.7px;line-height:14.7px;color:#15151c;letter-spacing:0.030px;">Boss/Base</div>
<svg class="r" style="left:91px;top:43px;overflow:visible;" width="16" height="16" viewBox="0 0 16 16"><path d="M8 0.5 V4 M8 6 V11 M8 13 V15.8" stroke="#111" stroke-width="1.1"/><path d="M0.6 9.6 C0.6 3.4 15.4 3.4 15.4 9.6 C15.4 12.4 10.8 12.4 10.8 9.8 C10.8 8 5.2 8 5.2 9.8 C5.2 12.4 0.6 12.4 0.6 9.6Z" fill="url(#gyv)" stroke="#6e4c00" stroke-width="0.9"/><ellipse cx="2.9" cy="9.9" rx="1.7" ry="1.4" fill="#fff4b0"/><ellipse cx="13.1" cy="9.9" rx="1.7" ry="1.4" fill="#fff4b0"/><path d="M8 6 V11" stroke="#111" stroke-width="1.1"/></svg>
<div class="t" style="left:76.50px;top:59.25px;font-size:10.7px;line-height:14.7px;color:#15151c;letter-spacing:0.058px;">Revolved</div>
<div class="t" style="left:73.30px;top:71.85px;font-size:10.7px;line-height:14.7px;color:#15151c;letter-spacing:0.030px;">Boss/Base</div>
<svg class="r" style="left:132px;top:35px;overflow:visible;" width="16" height="16" viewBox="0 0 16 16"><path d="M14.4 0.7 C3.5 -1 0.6 4.6 0.6 8 C0.6 11.4 3.5 17 14.4 15.3 C16.4 14.9 16.2 10 14.2 9.9 C9.6 10.6 7.2 9.8 7.2 8 C7.2 6.2 9.6 5.4 14.2 6.1 C16.2 6 16.4 1.1 14.4 0.7Z" fill="url(#gyv)" stroke="#6e4c00" stroke-width="0.9"/><ellipse cx="14.5" cy="3.4" rx="1.2" ry="2.3" fill="#fff5b8" stroke="#6e4c00" stroke-width="0.6"/><ellipse cx="14.5" cy="12.6" rx="1.2" ry="2.3" fill="#fff5b8" stroke="#6e4c00" stroke-width="0.6"/></svg>
<div class="t" style="left:155.40px;top:35.85px;font-size:10.7px;line-height:14.7px;color:#15151c;letter-spacing:0.168px;">Swept Boss/Base</div>
<svg class="r" style="left:132px;top:58px;overflow:visible;" width="16" height="16" viewBox="0 0 16 16"><path d="M5.6 1.6 C5.6 0.2 10.4 0.2 10.4 1.6 C10.4 6.5 12 9.5 15 12.2 C13.5 13.4 10.5 13.4 8 15.4 C5.5 13.4 2.5 13.4 1 12.2 C4 9.5 5.6 6.5 5.6 1.6Z" fill="url(#gyh)" stroke="#6e4c00" stroke-width="0.9" stroke-linejoin="round"/><ellipse cx="8" cy="1.7" rx="2.3" ry="0.9" fill="#fff6c4" stroke="#6e4c00" stroke-width="0.6"/></svg>
<div class="t" style="left:155.40px;top:58.85px;font-size:10.7px;line-height:14.7px;color:#15151c;letter-spacing:0.208px;">Lofted Boss/Base</div>
<svg class="r" style="left:132px;top:81px;overflow:visible;" width="16" height="16" viewBox="0 0 16 16"><path d="M1 6 L5 3.6 H9.5 L9.5 1.6 L12.5 0.6 L15.4 4.6 V13.4 L6.5 15.4 L1 12Z" fill="#ffd52a" stroke="#6e4c00" stroke-width="0.9" stroke-linejoin="round"/><path d="M1 6 L5 3.6 H9.5 L9.5 1.6 L12.5 0.6 L15.4 4.6 L11.5 5.2 L10 7.6 H6.5Z" fill="#fff0a0" stroke="#6e4c00" stroke-width="0.7" stroke-linejoin="round"/><path d="M6.5 7.6 H10 L11.5 5.2 L15.4 4.6 V13.4 L6.5 15.4Z" fill="url(#gy)" stroke="#6e4c00" stroke-width="0.7"/><path d="M1 6 L6.5 7.6 V15.4 L1 12Z" fill="#f0b400"/></svg>
<div class="t" style="left:155.40px;top:81.85px;font-size:10.7px;line-height:14.7px;color:#15151c;letter-spacing:0.239px;">Boundary Boss/Base</div>
<div class="r" style="left:270px;top:33px;width:1px;height:65px;background:#4a4c52;"></div>
<div class="r" style="left:271px;top:33px;width:1px;height:65px;background:#eceef2;"></div>
<svg class="r" style="left:293px;top:43px;overflow:visible;" width="16" height="16" viewBox="0 0 16 16"><path d="M1 0.8 H12.3 L15.5 4.0 V15.4 H4.2 L1 12.2Z" fill="#ffd52a" stroke="#6e4c00" stroke-width="1" stroke-linejoin="round"/><path d="M1 0.8 H12.3 L15.5 4.0 H4.2Z" fill="#fff1a0"/><path d="M1 0.8 L4.2 4.0 V15.4 L1 12.2Z" fill="#f2b600"/><rect x="4.2" y="4.0" width="11.3" height="11.399999999999999" fill="url(#gy)" stroke="#6e4c00" stroke-width="1"/><path d="M1 0.8 L4.2 4.0" stroke="#6e4c00" stroke-width="0.9"/><rect x="6.6" y="6.4" width="6.4" height="6.4" fill="#2cc82c" stroke="#0a6a0a" stroke-width="0.8"/><path d="M7.4 7.2 H11 V10.6 H7.4Z" fill="#e8e6c8"/><path d="M7.4 10.8 H12.2 V7.4" stroke="#0d8d0d" stroke-width="1.2" fill="none"/></svg>
<div class="t" style="left:278.30px;top:59.25px;font-size:10.7px;line-height:14.7px;color:#15151c;letter-spacing:0.365px;">Extruded</div>
<div class="t" style="left:292.50px;top:71.85px;font-size:10.7px;line-height:14.7px;color:#15151c;letter-spacing:0.182px;">Cut</div>
<svg class="r" style="left:344px;top:43px;overflow:visible;" width="16" height="16" viewBox="0 0 16 16"><path d="M0.8 4.6 H9.9 L12.3 7.0 V15.6 H3.2 L0.8 13.2Z" fill="#ffd52a" stroke="#6e4c00" stroke-width="1" stroke-linejoin="round"/><path d="M0.8 4.6 H9.9 L12.3 7.0 H3.2Z" fill="#fff1a0"/><path d="M0.8 4.6 L3.2 7.0 V15.6 L0.8 13.2Z" fill="#f2b600"/><rect x="3.2" y="7.0" width="9.1" height="8.6" fill="url(#gy)" stroke="#6e4c00" stroke-width="1"/><path d="M0.8 4.6 L3.2 7.0" stroke="#6e4c00" stroke-width="0.9"/><circle cx="7.6" cy="11.2" r="2.8" fill="#25c425" stroke="#0a6a0a" stroke-width="0.8"/><path d="M7.6 11.2 L9.2 9.4" stroke="#eaffea" stroke-width="0.9"/><path d="M9.2 1.2 L15 7" stroke="#0d0d0d" stroke-width="2.2"/><path d="M10.6 1.6 L14.8 5.8" stroke="#8a8a8a" stroke-width="0.6" stroke-dasharray="0.8 0.8"/><path d="M2.6 1 V3.6 M1.3 2.3 H3.9 M6.6 2.2 V4.6 M5.4 3.4 H7.8 M13.6 0.4 V2.8 M12.4 1.6 H14.8" stroke="#ff6a00" stroke-width="0.9"/></svg>
<div class="t" style="left:340.70px;top:59.25px;font-size:10.7px;line-height:14.7px;color:#15151c;letter-spacing:0.191px;">Hole</div>
<div class="t" style="left:334.50px;top:71.85px;font-size:10.7px;line-height:14.7px;color:#15151c;letter-spacing:0.338px;">Wizard</div>
<svg class="r" style="left:395px;top:43px;overflow:visible;" width="16" height="16" viewBox="0 0 16 16"><path d="M0.8 5 C0.8 0.2 15.2 0.2 15.2 5 V11.5 C15.2 16 0.8 16 0.8 11.5Z" fill="url(#gyh)" stroke="#6e4c00" stroke-width="0.9"/><ellipse cx="8" cy="4.8" rx="6.6" ry="3" fill="#fff3ae" stroke="#6e4c00" stroke-width="0.6"/><path d="M4.6 14.6 V7 C4.6 3.6 11.4 3.6 11.4 7 V14.6 L9.8 12 H6.2Z" fill="#1fbf1f" stroke="#0a6a0a" stroke-width="0.7"/><path d="M6.4 12 V7.4 C6.4 5.6 9.6 5.6 9.6 7.4 V12Z" fill="#0e8f0e"/></svg>
<div class="t" style="left:380.50px;top:59.25px;font-size:10.7px;line-height:14.7px;color:#15151c;letter-spacing:0.058px;">Revolved</div>
<div class="t" style="left:394.50px;top:71.85px;font-size:10.7px;line-height:14.7px;color:#15151c;letter-spacing:0.182px;">Cut</div>
<svg class="r" style="left:433px;top:35px;overflow:visible;" width="16" height="16" viewBox="0 0 16 16"><path d="M0.8 0.8 H12.400000000000002 L15.600000000000001 4.0 V15.4 H4.0 L0.8 12.2Z" fill="#ffd52a" stroke="#6e4c00" stroke-width="1" stroke-linejoin="round"/><path d="M0.8 0.8 H12.400000000000002 L15.600000000000001 4.0 H4.0Z" fill="#fff1a0"/><path d="M0.8 0.8 L4.0 4.0 V15.4 L0.8 12.2Z" fill="#f2b600"/><rect x="4.0" y="4.0" width="11.600000000000001" height="11.399999999999999" fill="url(#gy)" stroke="#6e4c00" stroke-width="1"/><path d="M0.8 0.8 L4.0 4.0" stroke="#6e4c00" stroke-width="0.9"/><path d="M15.4 6 H10 C5.6 6 5.6 13 10 13 H15.4 V11.2 H10.4 C8.4 11.2 8.4 7.8 10.4 7.8 H15.4Z" fill="#19c419" stroke="#0a6a0a" stroke-width="0.7"/></svg>
<div class="t" style="left:456.20px;top:35.85px;font-size:10.7px;line-height:14.7px;color:#15151c;letter-spacing:0.380px;">Swept Cut</div>
<svg class="r" style="left:433px;top:58px;overflow:visible;" width="16" height="16" viewBox="0 0 16 16"><path d="M0.8 0.8 H12.400000000000002 L15.600000000000001 4.0 V15.4 H4.0 L0.8 12.2Z" fill="#ffd52a" stroke="#6e4c00" stroke-width="1" stroke-linejoin="round"/><path d="M0.8 0.8 H12.400000000000002 L15.600000000000001 4.0 H4.0Z" fill="#fff1a0"/><path d="M0.8 0.8 L4.0 4.0 V15.4 L0.8 12.2Z" fill="#f2b600"/><rect x="4.0" y="4.0" width="11.600000000000001" height="11.399999999999999" fill="url(#gy)" stroke="#6e4c00" stroke-width="1"/><path d="M0.8 0.8 L4.0 4.0" stroke="#6e4c00" stroke-width="0.9"/><path d="M8.6 2.2 C9.4 1.2 10.6 1.2 11 2.2 C11.2 8 12.6 11.6 15 14.2 L14.6 15.6 C12.6 15 11.2 13.4 9.9 11.4 C8.6 13.4 7.4 15 5.4 15.6 L4.4 14.4 C7.2 11.6 8.6 8 8.6 2.2Z" fill="#1cc41c" stroke="#0a6a0a" stroke-width="0.7"/></svg>
<div class="t" style="left:456.20px;top:58.85px;font-size:10.7px;line-height:14.7px;color:#15151c;letter-spacing:0.471px;">Lofted Cut</div>
<svg class="r" style="left:433px;top:81px;overflow:visible;" width="16" height="16" viewBox="0 0 16 16"><path d="M1 7.4 L5 4.6 H15.2 V13.6 L6.6 15.6 L1 12.6Z" fill="#ffd52a" stroke="#6e4c00" stroke-width="0.9" stroke-linejoin="round"/><path d="M6.6 8.6 L15.2 6.6 V13.6 L6.6 15.6Z" fill="url(#gy)" stroke="#6e4c00" stroke-width="0.7"/><path d="M1 7.4 L6.6 8.6 V15.6 L1 12.6Z" fill="#f0b400"/><path d="M1 7.2 L4.8 4.4 H9.6 V2.4 L12.4 0.6 L15.4 4.2 L12 5 L10.4 7.4 L6.6 8.4Z" fill="#22cc22" stroke="#0a6a0a" stroke-width="0.8" stroke-linejoin="round"/><path d="M4 6.6 L6.4 5.2 H11 M7 7.6 L9.4 5.6" stroke="#9cff9c" stroke-width="0.7" fill="none"/></svg>
<div class="t" style="left:456.20px;top:81.85px;font-size:10.7px;line-height:14.7px;color:#15151c;letter-spacing:0.490px;">Boundary Cut</div>
<div class="r" style="left:537px;top:33px;width:1px;height:65px;background:#4a4c52;"></div>
<div class="r" style="left:538px;top:33px;width:1px;height:65px;background:#eceef2;"></div>
<svg class="r" style="left:549px;top:36px;overflow:visible;" width="16" height="16" viewBox="0 0 16 16"><path d="M0.8 8.2 L4.2 3.6 L11.4 1.4 L15.4 5.4 V13 L5 15.4 L0.8 12.6Z" fill="#ffd52a" stroke="#6e4c00" stroke-width="0.9" stroke-linejoin="round"/><path d="M5 9.4 L15.4 5.6 V13 L5 15.4Z" fill="url(#gy)"/><path d="M0.8 8.2 L5 9.4 V15.4 L0.8 12.6Z" fill="#eeb200"/><path d="M0.8 8.2 C1 3.2 6 0.4 11.6 1.2 C8.6 2.4 5.8 5.4 5 9.4Z" fill="#20c820" stroke="#0a6a0a" stroke-width="0.8" stroke-linejoin="round"/><path d="M11.6 1.2 C8.6 2.4 5.8 5.4 5 9.4 L15.4 5.6Z" fill="#fff2a6" stroke="#6e4c00" stroke-width="0.6"/></svg>
<div class="t" style="left:545.60px;top:52.45px;font-size:10.7px;line-height:14.7px;color:#15151c;letter-spacing:0.278px;">Fillet</div>
<svg class="r" style="left:552px;top:89px;" width="8" height="6" viewBox="0 0 8 6"><path d="M1.2000000000000002 1.5 H6.8 L4 4.5Z" fill="#2b2b2b"/></svg>
<svg class="r" style="left:590px;top:36px;overflow:visible;" width="16" height="16" viewBox="0 0 16 16"><rect x="1.2" y="0.8" width="3.4" height="6.6" rx="1.6" fill="#1fc71f" stroke="#0a6a0a" stroke-width="0.8"/><ellipse cx="2.9" cy="2.3" rx="1.2" ry="0.8" fill="#8dff8d"/><rect x="6.4" y="0.8" width="3.4" height="6.6" rx="1.6" fill="#1fc71f" stroke="#0a6a0a" stroke-width="0.8"/><ellipse cx="8.1" cy="2.3" rx="1.2" ry="0.8" fill="#8dff8d"/><rect x="11.6" y="0.8" width="3.4" height="6.6" rx="1.6" fill="#1fc71f" stroke="#0a6a0a" stroke-width="0.8"/><ellipse cx="13.299999999999999" cy="2.3" rx="1.2" ry="0.8" fill="#8dff8d"/><rect x="1.2" y="8.4" width="3.4" height="6.6" rx="1.6" fill="#ffd52a" stroke="#6e4c00" stroke-width="0.8"/><ellipse cx="2.9" cy="9.9" rx="1.2" ry="0.8" fill="#fff4b0"/><rect x="6.4" y="8.4" width="3.4" height="6.6" rx="1.6" fill="#1fc71f" stroke="#0a6a0a" stroke-width="0.8"/><ellipse cx="8.1" cy="9.9" rx="1.2" ry="0.8" fill="#8dff8d"/><rect x="11.6" y="8.4" width="3.4" height="6.6" rx="1.6" fill="#1fc71f" stroke="#0a6a0a" stroke-width="0.8"/><ellipse cx="13.299999999999999" cy="9.9" rx="1.2" ry="0.8" fill="#8dff8d"/></svg>
<div class="t" style="left:583.30px;top:52.45px;font-size:10.7px;line-height:14.7px;color:#15151c;letter-spacing:0.168px;">Linear</div>
<div class="t" style="left:580.30px;top:64.85px;font-size:10.7px;line-height:14.7px;color:#15151c;letter-spacing:0.353px;">Pattern</div>
<svg class="r" style="left:593px;top:89px;" width="8" height="6" viewBox="0 0 8 6"><path d="M1.2000000000000002 1.5 H6.8 L4 4.5Z" fill="#2b2b2b"/></svg>
<svg class="r" style="left:624px;top:35px;overflow:visible;" width="16" height="16" viewBox="0 0 16 16"><path d="M7.4 0.8 L11.2 0.8 L15.2 6.2 V14.8 L5.6 15.4 L0.8 12.4 L0.8 10.2 L7.4 7.2Z" fill="#ffd52a" stroke="#6e4c00" stroke-width="0.9" stroke-linejoin="round"/><path d="M11.4 1.2 L15.2 6.2 V14.8 L5.6 15.4 V12.6 L11.4 11.4Z" fill="url(#gy)" stroke="#6e4c00" stroke-width="0.6"/><path d="M0.8 10.2 L5.6 12.6 V15.4 L0.8 12.4Z" fill="#eeb200"/><path d="M3 9.6 L10 3 V10.6 L5.6 11.6Z" fill="#5fdc5f" stroke="#0a6a0a" stroke-width="0.8" stroke-linejoin="round"/><path d="M4.6 9.8 L9 5.4 V9.6Z" fill="#16a616"/></svg>
<div class="t" style="left:647.60px;top:35.85px;font-size:10.7px;line-height:14.7px;color:#15151c;letter-spacing:-0.125px;">Rib</div>
<svg class="r" style="left:624px;top:58px;overflow:visible;" width="16" height="16" viewBox="0 0 16 16"><path d="M0.8 2 L8.6 0.8 L15.4 6.4 V15 H9.4 L0.8 9.4Z" fill="#18bd18" stroke="#0a6a0a" stroke-width="0.9" stroke-linejoin="round"/><path d="M0.8 2 L8.6 0.8 L15.4 6.4 L9.4 7.6Z" fill="#5dea5d"/><path d="M0.8 2 L9.4 7.6 V15 L0.8 9.4Z" fill="#0f9e0f"/><rect x="9.6" y="8" width="5.6" height="6.8" fill="#ffe04a" stroke="#6e4c00" stroke-width="0.9"/></svg>
<div class="t" style="left:647.60px;top:58.85px;font-size:10.7px;line-height:14.7px;color:#15151c;letter-spacing:0.501px;">Draft</div>
<svg class="r" style="left:624px;top:81px;overflow:visible;" width="16" height="16" viewBox="0 0 16 16"><path d="M0.8 0.8 H12.200000000000001 L15.600000000000001 4.2 V15.4 H4.2 L0.8 12.0Z" fill="#ffd52a" stroke="#6e4c00" stroke-width="1" stroke-linejoin="round"/><path d="M0.8 0.8 H12.200000000000001 L15.600000000000001 4.2 H4.2Z" fill="#fff1a0"/><path d="M0.8 0.8 L4.2 4.2 V15.4 L0.8 12.0Z" fill="#f2b600"/><rect x="4.2" y="4.2" width="11.4" height="11.2" fill="url(#gy)" stroke="#6e4c00" stroke-width="1"/><path d="M0.8 0.8 L4.2 4.2" stroke="#6e4c00" stroke-width="0.9"/><rect x="5.2" y="5.2" width="9.4" height="9.2" fill="#16b216" stroke="#0a6a0a" stroke-width="0.8"/><path d="M5.2 5.2 L7.8 7.8 V12 L5.2 14.4Z" fill="#0c8a0c"/><path d="M5.2 5.2 L7.8 7.8 H12.2 L14.6 5.2Z" fill="#0f9c0f"/><rect x="7.8" y="7.8" width="4.4" height="4.2" fill="#3fe03f"/></svg>
<div class="t" style="left:647.60px;top:81.85px;font-size:10.7px;line-height:14.7px;color:#15151c;letter-spacing:0.104px;">Shell</div>
<svg class="r" style="left:685px;top:35px;overflow:visible;" width="16" height="16" viewBox="0 0 16 16"><path d="M0.8 3.6 C0.8 -0.2 15.2 -0.2 15.2 3.6 V12.4 C15.2 16.2 0.8 16.2 0.8 12.4Z" fill="url(#gyh)" stroke="#6e4c00" stroke-width="0.9"/><ellipse cx="8" cy="3.5" rx="6.6" ry="2.5" fill="#fff2a6" stroke="#6e4c00" stroke-width="0.7"/><path d="M2.4 7.2 C5 8.6 11 8.6 13.6 7.2 V12.6 C11 14 5 14 2.4 12.6Z" fill="#1fc41f" stroke="#0a6a0a" stroke-width="0.7"/><path d="M7 9.2 H4.4 V12.2 H7 M9 9.2 H11.6 V12.2 H9Z M10.3 9.2 V12.2" stroke="#0b5e0b" stroke-width="1" fill="none"/></svg>
<div class="t" style="left:708.40px;top:35.85px;font-size:10.7px;line-height:14.7px;color:#15151c;letter-spacing:0.610px;">Wrap</div>
<svg class="r" style="left:685px;top:58px;overflow:visible;" width="16" height="16" viewBox="0 0 16 16"><path d="M0.8 8 C3 7 3.4 5 4.6 5 L12.6 6.6 C13.6 8.4 14.6 9 15.4 9.2 V15.2 C13.6 14.6 12.6 13 11.2 13.6 C9.4 14.4 8.4 15.4 6.6 14.2 C5 13 3 14 0.8 15.4Z" fill="#f79a1c" stroke="#a85a00" stroke-width="0.8" stroke-linejoin="round"/><path d="M2.6 3.2 L6.4 0.8 L12.8 4 V10.4 L8.8 11.4 L2.6 8.6Z" fill="#ffd52a" stroke="#6e4c00" stroke-width="0.9" stroke-linejoin="round"/><path d="M2.6 3.2 L6.4 0.8 L12.8 4 L8.8 5.6Z" fill="#fff2a6"/><path d="M8.8 5.6 L12.8 4 V10.4 L8.8 11.4Z" fill="url(#gy)" stroke="#6e4c00" stroke-width="0.6"/></svg>
<div class="t" style="left:708.40px;top:58.85px;font-size:10.7px;line-height:14.7px;color:#15151c;letter-spacing:0.294px;">Intersect</div>
<svg class="r" style="left:685px;top:81px;overflow:visible;" width="16" height="16" viewBox="0 0 16 16"><path d="M0.8 1 H4.6 V7.4 H7 V10.4 H15.4 V14 L12.6 15.6 H3.6 L0.8 12.8Z" fill="#ffd52a" stroke="#6e4c00" stroke-width="0.9" stroke-linejoin="round"/><path d="M3.6 3.4 L4.6 1 V7.4 H7 V10.4 H15.4 L12.6 12 H3.6Z" fill="#fff0a0" stroke="#6e4c00" stroke-width="0.5"/><path d="M3.6 12 H12.6 V15.6 H3.6Z" fill="url(#gy)"/><path d="M8 2.8 L10 1 H13.8 V8.4 L12 10 H8Z" fill="#22c622" stroke="#0a6a0a" stroke-width="0.8" stroke-linejoin="round"/><rect x="10.6" y="2.4" width="2" height="6" fill="#7af27a"/></svg>
<div class="t" style="left:708.40px;top:81.85px;font-size:10.7px;line-height:14.7px;color:#15151c;letter-spacing:0.736px;">Mirror</div>
<div class="r" style="left:762px;top:33px;width:1px;height:65px;background:#4a4c52;"></div>
<div class="r" style="left:763px;top:33px;width:1px;height:65px;background:#eceef2;"></div>
<svg class="r" style="left:787px;top:36px;overflow:visible;" width="16" height="16" viewBox="0 0 16 16"><path d="M1.2 1.6 L4.4 5 M11.6 11.6 L14.6 14.8" stroke="#1b9e1b" stroke-width="1.2" stroke-dasharray="2 1.2"/><path d="M7.6 3.4 L12.6 8 L8 13 L3 8.4Z" fill="#ffe23a" stroke="#6e4c00" stroke-width="1"/><path d="M6 6.4 L10 10.2" stroke="#147a14" stroke-width="1.4"/><path d="M13 0.4 V6 M10.4 3.2 H15.6 M11.2 1.2 L14.8 5.2 M14.8 1.2 L11.2 5.2" stroke="#1a9a1a" stroke-width="0.9"/></svg>
<div class="t" style="left:770.50px;top:52.45px;font-size:10.7px;line-height:14.7px;color:#15151c;letter-spacing:0.055px;">Reference</div>
<div class="t" style="left:771.20px;top:64.85px;font-size:10.7px;line-height:14.7px;color:#15151c;letter-spacing:0.203px;">Geometry</div>
<svg class="r" style="left:791px;top:89px;" width="8" height="6" viewBox="0 0 8 6"><path d="M1.2000000000000002 1.5 H6.8 L4 4.5Z" fill="#2b2b2b"/></svg>
<svg class="r" style="left:840px;top:36px;overflow:visible;" width="16" height="16" viewBox="0 0 16 16"><path d="M2.2 3.4 C3.4 0.6 6.6 1.6 6.2 5 C5.6 9 2.4 10.6 4 13 C6 15.6 10.6 12.4 11.2 8.4 C11.8 4.6 12.6 2.4 15 1.4" fill="none" stroke="#0d7a1e" stroke-width="2.2" stroke-linecap="round"/><path d="M2.2 3.4 C3.4 0.6 6.6 1.6 6.2 5 C5.6 9 2.4 10.6 4 13 C6 15.6 10.6 12.4 11.2 8.4 C11.8 4.6 12.6 2.4 15 1.4" fill="none" stroke="#35b84a" stroke-width="0.8" stroke-linecap="round"/></svg>
<div class="t" style="left:831.70px;top:52.45px;font-size:10.7px;line-height:14.7px;color:#15151c;letter-spacing:-0.259px;">Curves</div>
<svg class="r" style="left:843px;top:89px;" width="8" height="6" viewBox="0 0 8 6"><path d="M1.2000000000000002 1.5 H6.8 L4 4.5Z" fill="#2b2b2b"/></svg>
<div class="r" style="left:870px;top:33px;width:1px;height:65px;background:#4a4c52;"></div>
<div class="r" style="left:871px;top:33px;width:1px;height:65px;background:#eceef2;"></div>
<div class="r" style="left:873px;top:31px;width:60px;height:69px;background:#b6b8bc;box-sizing:border-box;border:1px solid #4d4f55;"></div>
<svg class="r" style="left:895px;top:43px;overflow:visible;" width="16" height="16" viewBox="0 0 16 16"><path d="M4.4 0.6 L15.6 6.2 V10.4 L4.4 4.4Z" fill="#e9d86a" stroke="#6d6536" stroke-width="0.8" stroke-linejoin="round"/><path d="M6.4 2.2 V4.2 M8.4 3.2 V5.2 M10.4 4.2 V6.2 M12.4 5.2 V7.2 M14.2 6.2 V8.2" stroke="#3d3a22" stroke-width="0.7"/><path d="M1 6.6 L11.4 12.2" stroke="#2a8df0" stroke-width="2.2"/><path d="M15.2 15.2 L8.6 14.6 L12.2 9.8Z" fill="#1e7be0"/></svg>
<div class="t" style="left:878.60px;top:59.05px;font-size:10.7px;line-height:14.7px;color:#15151c;letter-spacing:0.374px;">Instant3D</div>
<svg class="r" style="left:945px;top:43px;overflow:visible;" width="16" height="16" viewBox="0 0 16 16"><path d="M1.6 7.4 V12.6 C1.6 16.2 14.4 16.2 14.4 12.6 V7.4Z" fill="url(#gyh)" stroke="#6e4c00" stroke-width="0.9"/><path d="M1.6 7.6 C1.6 -1.8 14.4 -1.8 14.4 7.6 C14.4 10 1.6 10 1.6 7.6Z" fill="#1fcc1f" stroke="#0a6a0a" stroke-width="0.8"/><ellipse cx="6" cy="3.8" rx="2.6" ry="1.6" fill="#8cff8c" opacity=".8"/></svg>
<div class="t" style="left:938.50px;top:59.05px;font-size:10.7px;line-height:14.7px;color:#15151c;letter-spacing:0.151px;">Dome</div>
<div class="r" style="left:0px;top:155px;width:285px;height:1px;background:#1f2023;"></div>
<div class="r" style="left:28px;top:134px;width:29px;height:22px;background:#adaeb1;box-sizing:border-box;border:1.5px solid #1f2023;border-bottom:none;"></div>
<div class="r" style="left:56px;top:134px;width:29px;height:22px;background:#adaeb1;box-sizing:border-box;border:1.5px solid #1f2023;border-bottom:none;"></div>
<div class="r" style="left:84px;top:134px;width:29px;height:22px;background:#adaeb1;box-sizing:border-box;border:1.5px solid #1f2023;border-bottom:none;"></div>
<div class="r" style="left:112px;top:134px;width:28px;height:22px;background:#adaeb1;box-sizing:border-box;border:1.5px solid #1f2023;border-bottom:none;"></div>
<div class="r" style="left:0px;top:134px;width:28px;height:23px;background:#e7e9ed;box-sizing:border-box;border-top:1.5px solid #1f2023;border-left:1px solid #1f2023;"></div>
<svg class="r" style="left:5px;top:136px;" width="19" height="19" viewBox="0 0 19 19"><g transform="rotate(8 9 9)"><path d="M1.4 3.6 L5.6 1 L10 4 V7 L17 11 V14.6 L12 17.6 L1.4 10Z" fill="#ffd52a" stroke="#7a5600" stroke-width="1" stroke-linejoin="round"/><path d="M1.4 3.6 L5.6 1 L10 4 L6 6.4Z M6.2 9.4 L10 7 L17 11 L12 13.6Z" fill="#fff1a0" stroke="#7a5600" stroke-width="0.6"/><path d="M1.4 3.6 L6 6.4 V9.4 L12 13.6 V17.6 L1.4 10Z" fill="#e8a800"/></g></svg>
<svg class="r" style="left:33px;top:137px;" width="19" height="18" viewBox="0 0 19 18"><rect x="1.6" y="4.6" width="12.6" height="12.4" fill="#f4f4f6" stroke="#50535a" stroke-width="1"/><rect x="3.4" y="7.4" width="2.4" height="2.4" fill="none" stroke="#3b5fc0" stroke-width="0.7"/><rect x="3.4" y="11.8" width="2.4" height="2.4" fill="none" stroke="#3b5fc0" stroke-width="0.7"/><path d="M7 8.6 H12.6 M7 13 H12.6" stroke="#8c8f99" stroke-width="0.9"/><path d="M5.6 5.4 L10.2 1.2 L17.4 2.2 L17.6 5.2 L13.8 5 L11 7.4 L8 7.2Z" fill="#e9ba8c" stroke="#8a5a2e" stroke-width="0.7" stroke-linejoin="round"/></svg>
<svg class="r" style="left:61px;top:136px;" width="19" height="19" viewBox="0 0 19 19"><path d="M3 1 V14.6 H8.6 M3 5.6 H8.6" stroke="#222" stroke-width="1.1" fill="none"/><rect x="8.6" y="1.6" width="7" height="6.4" rx="1" fill="#ffd52a" stroke="#7a5600" stroke-width="0.9"/><rect x="8.6" y="11" width="7" height="6.4" rx="1" fill="#ffd52a" stroke="#7a5600" stroke-width="0.9"/><rect x="10" y="3" width="3" height="2" fill="#fff3b0"/><rect x="10" y="12.4" width="3" height="2" fill="#fff3b0"/></svg>
<svg class="r" style="left:89px;top:136px;" width="19" height="19" viewBox="0 0 19 19"><circle cx="9.5" cy="9.5" r="5.6" fill="none" stroke="#c424d8" stroke-width="1.5"/><path d="M9.5 0.8 V18.2 M0.8 9.5 H18.2" stroke="#c424d8" stroke-width="1.3"/><circle cx="9.5" cy="9.5" r="1.8" fill="#c424d8"/></svg>
<svg class="r" style="left:117px;top:136px;" width="19" height="19" viewBox="0 0 19 19"><defs><clipPath id="dmc"><circle cx="9.5" cy="9.5" r="8.4"/></clipPath></defs><g clip-path="url(#dmc)"><rect x="0" y="0" width="19" height="19" fill="#e8262a"/><path d="M0 9.5 L9.5 9.5 L4 19 H0Z" fill="#2a62e0"/><path d="M9.5 9.5 L19 12 V19 H3Z" fill="#f5c51c"/><path d="M4 19 L9.5 9.5 L12 19Z" fill="#27b43a"/><ellipse cx="12.4" cy="7" rx="4.6" ry="3.8" fill="#1a1a1a" transform="rotate(35 12.4 7)"/><ellipse cx="6.4" cy="4.6" rx="3" ry="1.8" fill="#ffb0b0" opacity=".8"/></g></svg>
<div class="t" style="left:271.00px;top:134.90px;font-size:15px;line-height:19px;color:#1a1a1a;font-weight:bold;">»</div>
<div class="r" style="left:1px;top:157px;width:283px;height:18px;background:#eeeef0;box-sizing:border-box;border:1px solid #33353a;border-top:1px solid #c9cbd1;"></div>
<svg class="r" style="left:8px;top:160px;" width="13" height="13" viewBox="0 0 13 13"><path d="M1 1.4 H12 L8 6.4 V11.8 L5 10 V6.4Z" fill="#9fd0ff" stroke="#1c50c8" stroke-width="1.3" stroke-linejoin="round"/></svg>
<svg class="r" style="left:3px;top:179px;overflow:visible;" width="17" height="17" viewBox="0 0 16 16"><path d="M0.8 3.6 L4.4 0.8 L9 3.4 L8.8 6 L15.2 9.8 V13.6 L10.4 15.6 L1.2 9.4Z" fill="#2fa8ee" stroke="#0a1ec8" stroke-width="1.3" stroke-linejoin="round"/><path d="M0.8 3.6 L5.4 6 L9 3.4 M5.4 6 V8.8 L10.4 12 L15.2 9.8 M10.4 12 V15.6 M5.4 8.8 L8.8 6" fill="none" stroke="#0a1ec8" stroke-width="1.1" stroke-linejoin="round"/><path d="M1.6 4.8 L4.8 6.6 V8.6 L1.8 8.8Z" fill="#1668d8"/></svg>
<svg class="r" style="left:22px;top:180px;overflow:visible;" width="15" height="15" viewBox="0 0 16 16"><path d="M0.6 6.2 L8 2.6 L15.4 6.2 L8 9.8Z" fill="#4a4a4a" stroke="#1a1a1a" stroke-width="0.7"/><path d="M3.4 8 V11.4 C5 13.6 11 13.6 12.6 11.4 V8 L8 10.2Z" fill="#8a8a8a" stroke="#2a2a2a" stroke-width="0.7"/><path d="M13.8 7 V12.4" stroke="#222" stroke-width="0.9"/><rect x="13" y="12" width="1.8" height="3" fill="#c8a030" stroke="#222" stroke-width="0.5"/></svg>
<div class="r" style="left:39px;top:180px;width:246px;height:15px;background:#3397fd;"></div>
<div class="t" style="left:41.40px;top:180.55px;font-size:11.5px;line-height:15.5px;color:#fff;letter-spacing:0.194px;width:243.5px;overflow:hidden;">Filter connector  (Default&lt;&lt;Default&gt;_Display S</div>
<svg class="r" style="left:21px;top:197px;overflow:visible;" width="16" height="16" viewBox="0 0 16 16"><path d="M0.8 2.6 Q0.8 1.4 2 1.4 H6 L7.6 3.2 H14 Q15.2 3.2 15.2 4.4 V13.6 Q15.2 14.8 14 14.8 H2 Q0.8 14.8 0.8 13.6Z" fill="#f2c02a" stroke="#b98a10" stroke-width="0.9"/><path d="M1.4 5 H14.6 V13.6 Q14.6 14.2 14 14.2 H2 Q1.4 14.2 1.4 13.6Z" fill="url(#gfold)"/><circle cx="8.6" cy="9.2" r="4.3" fill="#fff" stroke="#2a3fd0" stroke-width="1.3"/><path d="M8.6 6.6 V9.4 H10.8" stroke="#d02020" stroke-width="1.1" fill="none"/><path d="M3 4 C5 1 10 0.6 13 3.2 L13.8 1.4 L14.4 5.6 L10.4 4.8 L12 3.8 C9.6 2 6 2.4 4.2 4.6Z" fill="#27a33a"/><path d="M5 13.6 L4 15 M12.2 13.6 L13.2 15" stroke="#2a3fd0" stroke-width="1.1"/></svg>
<div class="t" style="left:42.00px;top:198.65px;font-size:11.5px;line-height:15.5px;color:#111118;letter-spacing:0.400px;">History</div>
<svg class="r" style="left:6px;top:201px;z-index:2;" width="9" height="9" viewBox="0 0 9 9"><rect x="0.5" y="0.5" width="8" height="8" fill="#fdfdfe" stroke="#8f939c" stroke-width="1"/><path d="M2 4.5 H7" stroke="#1c3a9c" stroke-width="1"/><path d="M4.5 2 V7" stroke="#1c3a9c" stroke-width="1"/></svg>
<svg class="r" style="left:21px;top:215px;overflow:visible;" width="16" height="16" viewBox="0 0 16 16"><path d="M0.8 2.6 Q0.8 1.4 2 1.4 H6 L7.6 3.2 H14 Q15.2 3.2 15.2 4.4 V13.6 Q15.2 14.8 14 14.8 H2 Q0.8 14.8 0.8 13.6Z" fill="#f2c02a" stroke="#b98a10" stroke-width="0.9"/><path d="M1.4 5 H14.6 V13.6 Q14.6 14.2 14 14.2 H2 Q1.4 14.2 1.4 13.6Z" fill="url(#gfold)"/><circle cx="8.4" cy="9.2" r="4.2" fill="#fff" stroke="#333" stroke-width="1.1"/><path d="M6.2 11.4 L10.6 7" stroke="#2a5fd8" stroke-width="1.3"/><circle cx="8.4" cy="9.2" r="0.9" fill="#333"/><path d="M8.4 5.6 V6.4 M4.8 9.2 H5.6 M11.2 9.2 H12" stroke="#333" stroke-width="0.7"/></svg>
<div class="t" style="left:42.00px;top:216.65px;font-size:11.5px;line-height:15.5px;color:#111118;letter-spacing:-0.364px;">Sensors</div>
<svg class="r" style="left:21px;top:233px;overflow:visible;" width="16" height="16" viewBox="0 0 16 16"><path d="M0.8 2.6 Q0.8 1.4 2 1.4 H6 L7.6 3.2 H14 Q15.2 3.2 15.2 4.4 V13.6 Q15.2 14.8 14 14.8 H2 Q0.8 14.8 0.8 13.6Z" fill="#f2c02a" stroke="#b98a10" stroke-width="0.9"/><path d="M1.4 5 H14.6 V13.6 Q14.6 14.2 14 14.2 H2 Q1.4 14.2 1.4 13.6Z" fill="url(#gfold)"/><text x="8.2" y="13.2" text-anchor="middle" font-family="Liberation Serif, serif" font-weight="bold" font-size="11.5" fill="#1e3fd0">A</text></svg>
<div class="t" style="left:42.00px;top:234.65px;font-size:11.5px;line-height:15.5px;color:#111118;letter-spacing:0.427px;">Annotations</div>
<svg class="r" style="left:6px;top:237px;z-index:2;" width="9" height="9" viewBox="0 0 9 9"><rect x="0.5" y="0.5" width="8" height="8" fill="#fdfdfe" stroke="#8f939c" stroke-width="1"/><path d="M2 4.5 H7" stroke="#1c3a9c" stroke-width="1"/><path d="M4.5 2 V7" stroke="#1c3a9c" stroke-width="1"/></svg>
<svg class="r" style="left:21px;top:251px;overflow:visible;" width="16" height="16" viewBox="0 0 16 16"><circle cx="3" cy="2.8" r="2.5" fill="#e02424"/><circle cx="3" cy="8" r="2.5" fill="#2a4fe0"/><circle cx="3" cy="13.2" r="2.5" fill="#22b422"/><circle cx="2.3" cy="2" r="0.9" fill="#ff9a9a"/><circle cx="2.3" cy="7.2" r="0.9" fill="#9ab4ff"/><circle cx="2.3" cy="12.4" r="0.9" fill="#a0f0a0"/><path d="M7 2.8 H15.4 M7 8 H15.4 M7 13.2 H15.4" stroke="#222" stroke-width="1.7"/></svg>
<div class="t" style="left:42.00px;top:252.65px;font-size:11.5px;line-height:15.5px;color:#111118;letter-spacing:0.283px;">Material &lt;not specified&gt;</div>
<svg class="r" style="left:21px;top:269px;overflow:visible;" width="16" height="16" viewBox="0 0 16 16"><path d="M0.6 7.6 L7.6 0.6 L14.8 7.6 L7.6 14.4Z" fill="none" stroke="#1a1a1a" stroke-width="1"/><path d="M0.2 0.4 L2.8 3.2 M12.4 11.8 L15.2 14.8 M5.4 5 L9 8.6" stroke="#1a1a1a" stroke-width="1"/></svg>
<div class="t" style="left:42.00px;top:270.65px;font-size:11.5px;line-height:15.5px;color:#111118;letter-spacing:0.077px;">Front Plane</div>
<svg class="r" style="left:21px;top:287px;overflow:visible;" width="16" height="16" viewBox="0 0 16 16"><path d="M0.6 7.6 L7.6 0.6 L14.8 7.6 L7.6 14.4Z" fill="none" stroke="#1a1a1a" stroke-width="1"/><path d="M0.2 0.4 L2.8 3.2 M12.4 11.8 L15.2 14.8 M5.4 5 L9 8.6" stroke="#1a1a1a" stroke-width="1"/></svg>
<div class="t" style="left:42.00px;top:288.65px;font-size:11.5px;line-height:15.5px;color:#111118;letter-spacing:0.279px;">Top Plane</div>
<svg class="r" style="left:21px;top:305px;overflow:visible;" width="16" height="16" viewBox="0 0 16 16"><path d="M0.6 7.6 L7.6 0.6 L14.8 7.6 L7.6 14.4Z" fill="none" stroke="#1a1a1a" stroke-width="1"/><path d="M0.2 0.4 L2.8 3.2 M12.4 11.8 L15.2 14.8 M5.4 5 L9 8.6" stroke="#1a1a1a" stroke-width="1"/></svg>
<div class="t" style="left:42.00px;top:306.65px;font-size:11.5px;line-height:15.5px;color:#111118;letter-spacing:0.072px;">Right Plane</div>
<svg class="r" style="left:21px;top:323px;overflow:visible;" width="16" height="16" viewBox="0 0 16 16"><path d="M5.5 11.4 V2.6 M5.5 11.4 H12.6" stroke="#c81e1e" stroke-width="1.2"/><path d="M5.5 0.4 L7.8 3.6 H3.2Z M14.6 11.4 L11.4 9.2 V13.6Z" fill="#c81e1e"/><path d="M3 9 L7.8 13.8 M7.8 9 L3 13.8 M5.4 8.4 V14.4 M2.4 11.4 H8.4" stroke="#111" stroke-width="0.8"/></svg>
<div class="t" style="left:42.00px;top:324.65px;font-size:11.5px;line-height:15.5px;color:#111118;letter-spacing:0.384px;">Origin</div>
<svg class="r" style="left:21px;top:341px;overflow:visible;" width="16" height="16" viewBox="0 0 16 16"><path d="M0.8 2.6 Q0.8 1.4 2 1.4 H6 L7.6 3.2 H14 Q15.2 3.2 15.2 4.4 V13.6 Q15.2 14.8 14 14.8 H2 Q0.8 14.8 0.8 13.6Z" fill="#f2c02a" stroke="#b98a10" stroke-width="0.9"/><path d="M1.4 5 H14.6 V13.6 Q14.6 14.2 14 14.2 H2 Q1.4 14.2 1.4 13.6Z" fill="url(#gfold)"/></svg>
<div class="t" style="left:42.00px;top:342.65px;font-size:11.5px;line-height:15.5px;color:#111118;letter-spacing:-0.611px;">Base</div>
<svg class="r" style="left:6px;top:345px;z-index:2;" width="9" height="9" viewBox="0 0 9 9"><rect x="0.5" y="0.5" width="8" height="8" fill="#fdfdfe" stroke="#8f939c" stroke-width="1"/><path d="M2 4.5 H7" stroke="#1c3a9c" stroke-width="1"/></svg>
<svg class="r" style="left:40px;top:359px;overflow:visible;" width="16" height="16" viewBox="0 0 16 16"><path d="M1 0.8 H10.5 L13.5 3.8 V13.3 H4 L1 10.3Z" fill="#ffd52a" stroke="#6e4c00" stroke-width="1" stroke-linejoin="round"/><path d="M1 0.8 H10.5 L13.5 3.8 H4Z" fill="#fff1a0"/><path d="M1 0.8 L4 3.8 V13.3 L1 10.3Z" fill="#f2b600"/><rect x="4" y="3.8" width="9.5" height="9.5" fill="url(#gy)" stroke="#6e4c00" stroke-width="1"/><path d="M1 0.8 L4 3.8" stroke="#6e4c00" stroke-width="0.9"/><path d="M5.5 7.5 L8.5 5.5 L15.2 10.2 V15.5 H10.5 L5.5 11Z" fill="#0f9a0f" stroke="#0a6a0a" stroke-width="0.8" stroke-linejoin="round"/><path d="M5.8 7.6 L8.5 5.9 L14.6 10.2 L11 10.6Z" fill="#38d838"/><rect x="10.6" y="10.6" width="4.4" height="4.6" fill="#3fe63f" stroke="#0a6a0a" stroke-width="0.7"/></svg>
<div class="t" style="left:61.00px;top:360.65px;font-size:11.5px;line-height:15.5px;color:#111118;letter-spacing:0.255px;">Body</div>
<svg class="r" style="left:25px;top:363px;z-index:2;" width="9" height="9" viewBox="0 0 9 9"><rect x="0.5" y="0.5" width="8" height="8" fill="#fdfdfe" stroke="#8f939c" stroke-width="1"/><path d="M2 4.5 H7" stroke="#1c3a9c" stroke-width="1"/><path d="M4.5 2 V7" stroke="#1c3a9c" stroke-width="1"/></svg>
<svg class="r" style="left:40px;top:377px;overflow:visible;" width="16" height="16" viewBox="0 0 16 16"><path d="M0.8 7.6 L6.6 1 H12.4 L15.4 4.4 V12.6 L5.2 15.4 L0.8 12.4Z" fill="#ffd52a" stroke="#6e4c00" stroke-width="0.9" stroke-linejoin="round"/><path d="M5.2 9.6 L15.4 4.4 V12.6 L5.2 15.4Z" fill="url(#gy)"/><path d="M0.8 7.6 L5.2 9.6 V15.4 L0.8 12.4Z" fill="#eeb200"/><path d="M0.8 7.6 L6.6 1 H12.4 L5.2 9.6Z" fill="#22c822" stroke="#0a6a0a" stroke-width="0.8" stroke-linejoin="round"/><path d="M12.4 1 L15.4 4.4 L5.2 9.6Z" fill="#fff2a6" stroke="#6e4c00" stroke-width="0.5"/></svg>
<div class="t" style="left:61.00px;top:378.65px;font-size:11.5px;line-height:15.5px;color:#111118;letter-spacing:0.436px;">Bottom Chamfer</div>
<svg class="r" style="left:40px;top:395px;overflow:visible;" width="16" height="16" viewBox="0 0 16 16"><path d="M0.8 0.8 H12.200000000000001 L15.600000000000001 4.2 V15.4 H4.2 L0.8 12.0Z" fill="#ffd52a" stroke="#6e4c00" stroke-width="1" stroke-linejoin="round"/><path d="M0.8 0.8 H12.200000000000001 L15.600000000000001 4.2 H4.2Z" fill="#fff1a0"/><path d="M0.8 0.8 L4.2 4.2 V15.4 L0.8 12.0Z" fill="#f2b600"/><rect x="4.2" y="4.2" width="11.4" height="11.2" fill="url(#gy)" stroke="#6e4c00" stroke-width="1"/><path d="M0.8 0.8 L4.2 4.2" stroke="#6e4c00" stroke-width="0.9"/><rect x="5.2" y="5.2" width="9.4" height="9.2" fill="#16b216" stroke="#0a6a0a" stroke-width="0.8"/><path d="M5.2 5.2 L7.8 7.8 V12 L5.2 14.4Z" fill="#0c8a0c"/><path d="M5.2 5.2 L7.8 7.8 H12.2 L14.6 5.2Z" fill="#0f9c0f"/><rect x="7.8" y="7.8" width="4.4" height="4.2" fill="#3fe03f"/></svg>
<div class="t" style="left:61.00px;top:396.65px;font-size:11.5px;line-height:15.5px;color:#111118;letter-spacing:0.054px;">Inside clear</div>
<svg class="r" style="left:40px;top:413px;overflow:visible;" width="16" height="16" viewBox="0 0 16 16"><path d="M0.6 7.6 L7.6 0.6 L14.8 7.6 L7.6 14.4Z" fill="none" stroke="#1a1a1a" stroke-width="1"/><path d="M0.2 0.4 L2.8 3.2 M12.4 11.8 L15.2 14.8 M5.4 5 L9 8.6" stroke="#1a1a1a" stroke-width="1"/></svg>
<div class="t" style="left:61.00px;top:414.65px;font-size:11.5px;line-height:15.5px;color:#111118;letter-spacing:-0.201px;">Plane1</div>
<svg class="r" style="left:40px;top:431px;overflow:visible;" width="16" height="16" viewBox="0 0 16 16"><path d="M14.4 0.7 C3.5 -1 0.6 4.6 0.6 8 C0.6 11.4 3.5 17 14.4 15.3 C16.4 14.9 16.2 10 14.2 9.9 C9.6 10.6 7.2 9.8 7.2 8 C7.2 6.2 9.6 5.4 14.2 6.1 C16.2 6 16.4 1.1 14.4 0.7Z" fill="url(#gyv)" stroke="#6e4c00" stroke-width="0.9"/><ellipse cx="14.5" cy="3.4" rx="1.2" ry="2.3" fill="#fff5b8" stroke="#6e4c00" stroke-width="0.6"/><ellipse cx="14.5" cy="12.6" rx="1.2" ry="2.3" fill="#fff5b8" stroke="#6e4c00" stroke-width="0.6"/></svg>
<div class="t" style="left:61.00px;top:432.65px;font-size:11.5px;line-height:15.5px;color:#111118;letter-spacing:0.277px;">thread</div>
<svg class="r" style="left:25px;top:435px;z-index:2;" width="9" height="9" viewBox="0 0 9 9"><rect x="0.5" y="0.5" width="8" height="8" fill="#fdfdfe" stroke="#8f939c" stroke-width="1"/><path d="M2 4.5 H7" stroke="#1c3a9c" stroke-width="1"/><path d="M4.5 2 V7" stroke="#1c3a9c" stroke-width="1"/></svg>
<svg class="r" style="left:40px;top:449px;overflow:visible;" width="16" height="16" viewBox="0 0 16 16"><path d="M1.6 7.4 V12.6 C1.6 16.2 14.4 16.2 14.4 12.6 V7.4Z" fill="url(#gyh)" stroke="#6e4c00" stroke-width="0.9"/><path d="M1.6 7.6 C1.6 -1.8 14.4 -1.8 14.4 7.6 C14.4 10 1.6 10 1.6 7.6Z" fill="#1fcc1f" stroke="#0a6a0a" stroke-width="0.8"/><ellipse cx="6" cy="3.8" rx="2.6" ry="1.6" fill="#8cff8c" opacity=".8"/></svg>
<div class="t" style="left:61.00px;top:450.65px;font-size:11.5px;line-height:15.5px;color:#111118;letter-spacing:0.092px;">Thread cap</div>
<svg class="r" style="left:40px;top:467px;overflow:visible;" width="16" height="16" viewBox="0 0 16 16"><path d="M1 0.8 H10.5 L13.5 3.8 V13.3 H4 L1 10.3Z" fill="#ffd52a" stroke="#6e4c00" stroke-width="1" stroke-linejoin="round"/><path d="M1 0.8 H10.5 L13.5 3.8 H4Z" fill="#fff1a0"/><path d="M1 0.8 L4 3.8 V13.3 L1 10.3Z" fill="#f2b600"/><rect x="4" y="3.8" width="9.5" height="9.5" fill="url(#gy)" stroke="#6e4c00" stroke-width="1"/><path d="M1 0.8 L4 3.8" stroke="#6e4c00" stroke-width="0.9"/><path d="M5.5 7.5 L8.5 5.5 L15.2 10.2 V15.5 H10.5 L5.5 11Z" fill="#0f9a0f" stroke="#0a6a0a" stroke-width="0.8" stroke-linejoin="round"/><path d="M5.8 7.6 L8.5 5.9 L14.6 10.2 L11 10.6Z" fill="#38d838"/><rect x="10.6" y="10.6" width="4.4" height="4.6" fill="#3fe63f" stroke="#0a6a0a" stroke-width="0.7"/></svg>
<div class="t" style="left:61.00px;top:468.65px;font-size:11.5px;line-height:15.5px;color:#111118;letter-spacing:-0.043px;">Gasket wall</div>
<svg class="r" style="left:25px;top:471px;z-index:2;" width="9" height="9" viewBox="0 0 9 9"><rect x="0.5" y="0.5" width="8" height="8" fill="#fdfdfe" stroke="#8f939c" stroke-width="1"/><path d="M2 4.5 H7" stroke="#1c3a9c" stroke-width="1"/><path d="M4.5 2 V7" stroke="#1c3a9c" stroke-width="1"/></svg>
<svg class="r" style="left:40px;top:485px;overflow:visible;" width="16" height="16" viewBox="0 0 16 16"><path d="M0.8 2 L8.6 0.8 L15.4 6.4 V15 H9.4 L0.8 9.4Z" fill="#18bd18" stroke="#0a6a0a" stroke-width="0.9" stroke-linejoin="round"/><path d="M0.8 2 L8.6 0.8 L15.4 6.4 L9.4 7.6Z" fill="#5dea5d"/><path d="M0.8 2 L9.4 7.6 V15 L0.8 9.4Z" fill="#0f9e0f"/><rect x="9.6" y="8" width="5.6" height="6.8" fill="#ffe04a" stroke="#6e4c00" stroke-width="0.9"/></svg>
<div class="t" style="left:61.00px;top:486.65px;font-size:11.5px;line-height:15.5px;color:#111118;letter-spacing:0.034px;">Gasket draft</div>
<svg class="r" style="left:21px;top:503px;overflow:visible;" width="16" height="16" viewBox="0 0 16 16"><path d="M0.8 2.6 Q0.8 1.4 2 1.4 H6 L7.6 3.2 H14 Q15.2 3.2 15.2 4.4 V13.6 Q15.2 14.8 14 14.8 H2 Q0.8 14.8 0.8 13.6Z" fill="#f2c02a" stroke="#b98a10" stroke-width="0.9"/><path d="M1.4 5 H14.6 V13.6 Q14.6 14.2 14 14.2 H2 Q1.4 14.2 1.4 13.6Z" fill="url(#gfold)"/></svg>
<div class="t" style="left:42.00px;top:504.65px;font-size:11.5px;line-height:15.5px;color:#111118;letter-spacing:0.448px;">Airflow connector</div>
<svg class="r" style="left:6px;top:507px;z-index:2;" width="9" height="9" viewBox="0 0 9 9"><rect x="0.5" y="0.5" width="8" height="8" fill="#fdfdfe" stroke="#8f939c" stroke-width="1"/><path d="M2 4.5 H7" stroke="#1c3a9c" stroke-width="1"/></svg>
<svg class="r" style="left:40px;top:521px;overflow:visible;" width="16" height="16" viewBox="0 0 16 16"><path d="M1 0.8 H12.3 L15.5 4.0 V15.4 H4.2 L1 12.2Z" fill="#ffd52a" stroke="#6e4c00" stroke-width="1" stroke-linejoin="round"/><path d="M1 0.8 H12.3 L15.5 4.0 H4.2Z" fill="#fff1a0"/><path d="M1 0.8 L4.2 4.0 V15.4 L1 12.2Z" fill="#f2b600"/><rect x="4.2" y="4.0" width="11.3" height="11.399999999999999" fill="url(#gy)" stroke="#6e4c00" stroke-width="1"/><path d="M1 0.8 L4.2 4.0" stroke="#6e4c00" stroke-width="0.9"/><rect x="6.6" y="6.4" width="6.4" height="6.4" fill="#2cc82c" stroke="#0a6a0a" stroke-width="0.8"/><path d="M7.4 7.2 H11 V10.6 H7.4Z" fill="#e8e6c8"/><path d="M7.4 10.8 H12.2 V7.4" stroke="#0d8d0d" stroke-width="1.2" fill="none"/></svg>
<div class="t" style="left:61.00px;top:522.65px;font-size:11.5px;line-height:15.5px;color:#111118;letter-spacing:0.452px;">Airflow hole</div>
<svg class="r" style="left:25px;top:525px;z-index:2;" width="9" height="9" viewBox="0 0 9 9"><rect x="0.5" y="0.5" width="8" height="8" fill="#fdfdfe" stroke="#8f939c" stroke-width="1"/><path d="M2 4.5 H7" stroke="#1c3a9c" stroke-width="1"/><path d="M4.5 2 V7" stroke="#1c3a9c" stroke-width="1"/></svg>
<svg class="r" style="left:40px;top:539px;overflow:visible;" width="16" height="16" viewBox="0 0 16 16"><path d="M1 0.8 H10.5 L13.5 3.8 V13.3 H4 L1 10.3Z" fill="#ffd52a" stroke="#6e4c00" stroke-width="1" stroke-linejoin="round"/><path d="M1 0.8 H10.5 L13.5 3.8 H4Z" fill="#fff1a0"/><path d="M1 0.8 L4 3.8 V13.3 L1 10.3Z" fill="#f2b600"/><rect x="4" y="3.8" width="9.5" height="9.5" fill="url(#gy)" stroke="#6e4c00" stroke-width="1"/><path d="M1 0.8 L4 3.8" stroke="#6e4c00" stroke-width="0.9"/><path d="M5.5 7.5 L8.5 5.5 L15.2 10.2 V15.5 H10.5 L5.5 11Z" fill="#0f9a0f" stroke="#0a6a0a" stroke-width="0.8" stroke-linejoin="round"/><path d="M5.8 7.6 L8.5 5.9 L14.6 10.2 L11 10.6Z" fill="#38d838"/><rect x="10.6" y="10.6" width="4.4" height="4.6" fill="#3fe63f" stroke="#0a6a0a" stroke-width="0.7"/></svg>
<div class="t" style="left:61.00px;top:540.65px;font-size:11.5px;line-height:15.5px;color:#111118;letter-spacing:0.427px;">Airflow wall</div>
<svg class="r" style="left:25px;top:543px;z-index:2;" width="9" height="9" viewBox="0 0 9 9"><rect x="0.5" y="0.5" width="8" height="8" fill="#fdfdfe" stroke="#8f939c" stroke-width="1"/><path d="M2 4.5 H7" stroke="#1c3a9c" stroke-width="1"/><path d="M4.5 2 V7" stroke="#1c3a9c" stroke-width="1"/></svg>
<svg class="r" style="left:40px;top:557px;overflow:visible;" width="16" height="16" viewBox="0 0 16 16"><path d="M1 0.8 H10.5 L13.5 3.8 V13.3 H4 L1 10.3Z" fill="#ffd52a" stroke="#6e4c00" stroke-width="1" stroke-linejoin="round"/><path d="M1 0.8 H10.5 L13.5 3.8 H4Z" fill="#fff1a0"/><path d="M1 0.8 L4 3.8 V13.3 L1 10.3Z" fill="#f2b600"/><rect x="4" y="3.8" width="9.5" height="9.5" fill="url(#gy)" stroke="#6e4c00" stroke-width="1"/><path d="M1 0.8 L4 3.8" stroke="#6e4c00" stroke-width="0.9"/><path d="M5.5 7.5 L8.5 5.5 L15.2 10.2 V15.5 H10.5 L5.5 11Z" fill="#0f9a0f" stroke="#0a6a0a" stroke-width="0.8" stroke-linejoin="round"/><path d="M5.8 7.6 L8.5 5.9 L14.6 10.2 L11 10.6Z" fill="#38d838"/><rect x="10.6" y="10.6" width="4.4" height="4.6" fill="#3fe63f" stroke="#0a6a0a" stroke-width="0.7"/></svg>
<div class="t" style="left:61.00px;top:558.65px;font-size:11.5px;line-height:15.5px;color:#111118;letter-spacing:0.302px;">Air flang</div>
<svg class="r" style="left:25px;top:561px;z-index:2;" width="9" height="9" viewBox="0 0 9 9"><rect x="0.5" y="0.5" width="8" height="8" fill="#fdfdfe" stroke="#8f939c" stroke-width="1"/><path d="M2 4.5 H7" stroke="#1c3a9c" stroke-width="1"/><path d="M4.5 2 V7" stroke="#1c3a9c" stroke-width="1"/></svg>
<svg class="r" style="left:40px;top:575px;overflow:visible;" width="16" height="16" viewBox="0 0 16 16"><path d="M0.8 2 L8.6 0.8 L15.4 6.4 V15 H9.4 L0.8 9.4Z" fill="#18bd18" stroke="#0a6a0a" stroke-width="0.9" stroke-linejoin="round"/><path d="M0.8 2 L8.6 0.8 L15.4 6.4 L9.4 7.6Z" fill="#5dea5d"/><path d="M0.8 2 L9.4 7.6 V15 L0.8 9.4Z" fill="#0f9e0f"/><rect x="9.6" y="8" width="5.6" height="6.8" fill="#ffe04a" stroke="#6e4c00" stroke-width="0.9"/></svg>
<div class="t" style="left:61.00px;top:576.65px;font-size:11.5px;line-height:15.5px;color:#111118;letter-spacing:0.096px;">Cross draft</div>
<svg class="r" style="left:40px;top:593px;overflow:visible;" width="16" height="16" viewBox="0 0 16 16"><path d="M1 0.8 H10.5 L13.5 3.8 V13.3 H4 L1 10.3Z" fill="#ffd52a" stroke="#6e4c00" stroke-width="1" stroke-linejoin="round"/><path d="M1 0.8 H10.5 L13.5 3.8 H4Z" fill="#fff1a0"/><path d="M1 0.8 L4 3.8 V13.3 L1 10.3Z" fill="#f2b600"/><rect x="4" y="3.8" width="9.5" height="9.5" fill="url(#gy)" stroke="#6e4c00" stroke-width="1"/><path d="M1 0.8 L4 3.8" stroke="#6e4c00" stroke-width="0.9"/><path d="M5.5 7.5 L8.5 5.5 L15.2 10.2 V15.5 H10.5 L5.5 11Z" fill="#0f9a0f" stroke="#0a6a0a" stroke-width="0.8" stroke-linejoin="round"/><path d="M5.8 7.6 L8.5 5.9 L14.6 10.2 L11 10.6Z" fill="#38d838"/><rect x="10.6" y="10.6" width="4.4" height="4.6" fill="#3fe63f" stroke="#0a6a0a" stroke-width="0.7"/></svg>
<div class="t" style="left:61.00px;top:594.65px;font-size:11.5px;line-height:15.5px;color:#111118;letter-spacing:-0.119px;">Boss-Extrude5</div>
<svg class="r" style="left:25px;top:597px;z-index:2;" width="9" height="9" viewBox="0 0 9 9"><rect x="0.5" y="0.5" width="8" height="8" fill="#fdfdfe" stroke="#8f939c" stroke-width="1"/><path d="M2 4.5 H7" stroke="#1c3a9c" stroke-width="1"/><path d="M4.5 2 V7" stroke="#1c3a9c" stroke-width="1"/></svg>
<svg class="r" style="left:21px;top:611px;overflow:visible;" width="16" height="16" viewBox="0 0 16 16"><path d="M0.8 3.6 C0.8 -0.2 15.2 -0.2 15.2 3.6 V12.4 C15.2 16.2 0.8 16.2 0.8 12.4Z" fill="url(#gyh)" stroke="#6e4c00" stroke-width="0.9"/><ellipse cx="8" cy="3.5" rx="6.6" ry="2.5" fill="#fff2a6" stroke="#6e4c00" stroke-width="0.7"/><path d="M2.4 7.2 C5 8.6 11 8.6 13.6 7.2 V12.6 C11 14 5 14 2.4 12.6Z" fill="#1fc41f" stroke="#0a6a0a" stroke-width="0.7"/><path d="M7 9.2 H4.4 V12.2 H7 M9 9.2 H11.6 V12.2 H9Z M10.3 9.2 V12.2" stroke="#0b5e0b" stroke-width="1" fill="none"/></svg>
<div class="t" style="left:42.00px;top:612.65px;font-size:11.5px;line-height:15.5px;color:#111118;letter-spacing:-0.096px;">Serial no</div>
<svg class="r" style="left:6px;top:615px;z-index:2;" width="9" height="9" viewBox="0 0 9 9"><rect x="0.5" y="0.5" width="8" height="8" fill="#fdfdfe" stroke="#8f939c" stroke-width="1"/><path d="M2 4.5 H7" stroke="#1c3a9c" stroke-width="1"/></svg>
<svg class="r" style="left:41px;top:628px;overflow:visible;" width="17" height="17" viewBox="0 0 16 16"><path d="M5.6 1.4 H0.8 V11.6 Q0.8 14.8 4 14.8 H14.4" fill="none" stroke="#111" stroke-width="1.1"/><path d="M2 11.4 L11.6 3.4 C13.4 2 15.8 3.6 14.4 5.6 L5 11.8 Z" fill="#f4f5f8" stroke="#111" stroke-width="0.9" stroke-linejoin="round"/><path d="M3.8 9.9 L5.8 11.3" stroke="#111" stroke-width="0.7"/></svg>
<div class="t" style="left:61.00px;top:630.65px;font-size:11.5px;line-height:15.5px;color:#111118;letter-spacing:0.034px;">(-) Sketch13</div>
<svg class="r" style="left:22px;top:646px;overflow:visible;" width="17" height="17" viewBox="0 0 16 16"><path d="M5.6 1.4 H0.8 V11.6 Q0.8 14.8 4 14.8 H14.4" fill="none" stroke="#111" stroke-width="1.1"/><path d="M2 11.4 L11.6 3.4 C13.4 2 15.8 3.6 14.4 5.6 L5 11.8 Z" fill="#f4f5f8" stroke="#111" stroke-width="0.9" stroke-linejoin="round"/><path d="M3.8 9.9 L5.8 11.3" stroke="#111" stroke-width="0.7"/></svg>
<div class="t" style="left:42.00px;top:648.65px;font-size:11.5px;line-height:15.5px;color:#111118;letter-spacing:0.053px;">(-) Sketch15</div>
<svg class="r" style="left:0px;top:176px;" width="60" height="490" viewBox="0 176 60 490"><path d="M10.5 196 V656" stroke="#7d8088" stroke-width="1" stroke-dasharray="1 1"/><path d="M11 205.5 H21" stroke="#7d8088" stroke-width="1" stroke-dasharray="1 1"/><path d="M11 223.5 H21" stroke="#7d8088" stroke-width="1" stroke-dasharray="1 1"/><path d="M11 241.5 H21" stroke="#7d8088" stroke-width="1" stroke-dasharray="1 1"/><path d="M11 259.5 H21" stroke="#7d8088" stroke-width="1" stroke-dasharray="1 1"/><path d="M11 277.5 H21" stroke="#7d8088" stroke-width="1" stroke-dasharray="1 1"/><path d="M11 295.5 H21" stroke="#7d8088" stroke-width="1" stroke-dasharray="1 1"/><path d="M11 313.5 H21" stroke="#7d8088" stroke-width="1" stroke-dasharray="1 1"/><path d="M11 331.5 H21" stroke="#7d8088" stroke-width="1" stroke-dasharray="1 1"/><path d="M11 349.5 H21" stroke="#7d8088" stroke-width="1" stroke-dasharray="1 1"/><path d="M30 367.5 H40" stroke="#7d8088" stroke-width="1" stroke-dasharray="1 1"/><path d="M30 385.5 H40" stroke="#7d8088" stroke-width="1" stroke-dasharray="1 1"/><path d="M30 403.5 H40" stroke="#7d8088" stroke-width="1" stroke-dasharray="1 1"/><path d="M30 421.5 H40" stroke="#7d8088" stroke-width="1" stroke-dasharray="1 1"/><path d="M30 439.5 H40" stroke="#7d8088" stroke-width="1" stroke-dasharray="1 1"/><path d="M30 457.5 H40" stroke="#7d8088" stroke-width="1" stroke-dasharray="1 1"/><path d="M30 475.5 H40" stroke="#7d8088" stroke-width="1" stroke-dasharray="1 1"/><path d="M30 493.5 H40" stroke="#7d8088" stroke-width="1" stroke-dasharray="1 1"/><path d="M11 511.5 H21" stroke="#7d8088" stroke-width="1" stroke-dasharray="1 1"/><path d="M30 529.5 H40" stroke="#7d8088" stroke-width="1" stroke-dasharray="1 1"/><path d="M30 547.5 H40" stroke="#7d8088" stroke-width="1" stroke-dasharray="1 1"/><path d="M30 565.5 H40" stroke="#7d8088" stroke-width="1" stroke-dasharray="1 1"/><path d="M30 583.5 H40" stroke="#7d8088" stroke-width="1" stroke-dasharray="1 1"/><path d="M30 601.5 H40" stroke="#7d8088" stroke-width="1" stroke-dasharray="1 1"/><path d="M11 619.5 H21" stroke="#7d8088" stroke-width="1" stroke-dasharray="1 1"/><path d="M30 637.5 H40" stroke="#7d8088" stroke-width="1" stroke-dasharray="1 1"/><path d="M11 655.5 H21" stroke="#7d8088" stroke-width="1" stroke-dasharray="1 1"/><path d="M29.5 358 V494" stroke="#7d8088" stroke-width="1" stroke-dasharray="1 1"/><path d="M29.5 520 V602" stroke="#7d8088" stroke-width="1" stroke-dasharray="1 1"/><path d="M29.5 628 V638" stroke="#7d8088" stroke-width="1" stroke-dasharray="1 1"/></svg>
<div class="r" style="left:0px;top:665px;width:285px;height:2px;background:#2a6fd6;"></div>
<div class="r" style="left:0px;top:667px;width:285px;height:1px;background:#f6f7f9;"></div>
<div class="r" style="left:0px;top:675px;width:285px;height:15px;background:#eeeef0;"></div>
<div class="r" style="left:16px;top:675px;width:234px;height:15px;background:#c9c9c9;"></div>
<div class="r" style="left:0px;top:691px;width:285px;height:1px;background:#cfd3e4;"></div>
<svg class="r" style="left:2px;top:676px;" width="10" height="13" viewBox="0 0 10 13"><path d="M7.6 3 L3.2 6.5 L7.6 10" fill="none" stroke="#505050" stroke-width="2"/></svg>
<svg class="r" style="left:273px;top:676px;" width="10" height="13" viewBox="0 0 10 13"><path d="M3 3 L7.4 6.5 L3 10" fill="none" stroke="#505050" stroke-width="2"/></svg>
<div class="r" style="left:0px;top:728px;width:1366px;height:40px;background:linear-gradient(#3e5387,#3b4f82 30%,#394d7f);"></div>
<svg class="r" style="left:11px;top:733px;" width="28" height="28" viewBox="0 0 28 28"><path d="M0.8 4.6 L11.6 3.1 V13.2 H0.8Z M12.9 2.9 L27.2 0.9 V13.2 H12.9Z M0.8 14.5 H11.6 V24.7 L0.8 23.2Z M12.9 14.5 H27.2 V26.9 L12.9 24.9Z" fill="#fff"/></svg>
<svg class="r" style="left:66px;top:733px;" width="30" height="30" viewBox="0 0 30 30"><defs><radialGradient id="chb" cx="45%" cy="40%" r="60%"><stop offset="0" stop-color="#8fc4f5"/><stop offset="1" stop-color="#2a6fc9"/></radialGradient></defs><circle cx="15" cy="15" r="14.2" fill="#dd4b39"/><path d="M15 15 L2.7 7.9 A14.2 14.2 0 0 0 12.2 28.9 L18.5 17Z" fill="#4aae48"/><path d="M15 15 L12.2 28.9 A14.2 14.2 0 0 0 27.3 7.9 L15 7.9Z" fill="#f6c91c"/><path d="M2.7 7.9 A14.2 14.2 0 0 1 27.3 7.9 L15 7.9 L8.9 18.5Z" fill="#dd4b39"/><circle cx="15" cy="15" r="6.9" fill="#f1f1f1"/><circle cx="15" cy="15" r="5.5" fill="url(#chb)"/></svg>
<svg class="r" style="left:126px;top:731px;" width="34" height="34" viewBox="0 0 34 34"><defs><linearGradient id="ieb" x1="0" y1="0" x2="0" y2="1"><stop offset="0" stop-color="#5cc3f5"/><stop offset="1" stop-color="#1d8fe0"/></linearGradient></defs><g transform="translate(17.4 17.8) scale(1.16) translate(-17 -17.4)"><path d="M17 6.2 C10.2 6.2 5.8 11.2 5.8 17.4 C5.8 23.8 10.4 28.6 17.2 28.6 C22 28.6 25.8 26 27.4 21.8 L21.4 21.8 C20.6 23.2 19.2 24 17.3 24 C14.4 24 12.4 22 12.1 19 L28 19 C28.6 11.6 24.2 6.2 17 6.2Z M12.2 15 C12.7 12.3 14.5 10.7 17.1 10.7 C19.7 10.7 21.5 12.4 21.8 15Z" fill="url(#ieb)"/></g><path d="M24.5 8.2 C28.5 5.2 31.6 4.4 32.4 5.6 C33.2 6.9 31.8 9.8 29.6 12.6 M5.4 21.5 C2.4 26.4 1.8 29.8 3.2 30.8 C5 32 9.4 29.8 13.6 26.6" fill="none" stroke="#f3c11b" stroke-width="2.2" stroke-linecap="round"/><path d="M29.8 12.3 C31.6 9.8 32.4 7.5 31.7 6.4 C31 5.4 28.4 6 25.2 8.3 M5.2 22 C7 17 12 10.5 19 6" fill="none" stroke="#f3c11b" stroke-width="1.6" stroke-linecap="round" opacity=".85"/></svg>
<svg class="r" style="left:188px;top:733px;" width="34" height="30" viewBox="0 0 34 30"><defs><linearGradient id="fe1" x1="0" y1="0" x2="0" y2="1"><stop offset="0" stop-color="#fbeeb5"/><stop offset="1" stop-color="#eed27c"/></linearGradient><linearGradient id="fe2" x1="0" y1="0" x2="0" y2="1"><stop offset="0" stop-color="#bfe2fb"/><stop offset="1" stop-color="#4fa2e3"/></linearGradient></defs><path d="M2 4.5 Q2 3 3.5 3 H11.5 L13.5 5.5 H30.5 Q32 5.5 32 7 V26 Q32 27.5 30.5 27.5 H3.5 Q2 27.5 2 26Z" fill="#e9c869"/><rect x="4" y="5" width="3" height="1.8" fill="#2da84a"/><rect x="13.5" y="6.5" width="3" height="1.8" fill="#d0362a"/><rect x="21" y="8.2" width="3" height="1.8" fill="#2d86d8"/><path d="M2 9 H12 L14 11 H32 V26 Q32 27.5 30.5 27.5 H3.5 Q2 27.5 2 26Z" fill="url(#fe1)"/><path d="M6 19.5 Q6 18 7.5 18 H26.5 Q28 18 28 19.5 V29.5 H22.5 V23.5 H11.5 V29.5 H6Z" fill="url(#fe2)" stroke="#3d86c6" stroke-width="0.8"/><circle cx="9.5" cy="17.5" r="2.6" fill="#fff" opacity=".75"/></svg>
<div class="r" style="left:252px;top:733px;width:30px;height:30px;background:#0d8a10;"></div>
<svg class="r" style="left:252px;top:733px;" width="30" height="30" viewBox="0 0 30 30"><path d="M5.5 10.5 H24.5 L23 25 H7Z" fill="#fff"/><path d="M10.5 10.5 C10.5 3.5 19.5 3.5 19.5 10.5" fill="none" stroke="#fff" stroke-width="1.5"/><path d="M10.4 14.3 L14.3 13.8 V17.3 H10.4Z M15.2 13.7 L19.7 13 V17.3 H15.2Z M10.4 18.2 H14.3 V21.7 L10.4 21.2Z M15.2 18.2 H19.7 V22.5 L15.2 21.8Z" fill="#0d8a10"/></svg>
<div class="r" style="left:300px;top:729px;width:59px;height:38px;background:linear-gradient(#62739f,#5b6c99);box-sizing:border-box;border:1px solid #7e8db3;"></div>
<div class="r" style="left:315px;top:733px;width:28px;height:27px;background:#1a1b66;box-sizing:border-box;border:2px solid #8ec6ff;"></div>
<div class="t" style="left:320.00px;top:736.75px;font-size:15.5px;line-height:19.5px;color:#9bd0ff;letter-spacing:0.396px;-webkit-text-stroke:0.5px #9bd0ff;">Ps</div>
<div class="r" style="left:377px;top:733px;width:28px;height:27px;background:#2a1503;box-sizing:border-box;border:2px solid #ff9f1a;"></div>
<div class="t" style="left:383.50px;top:736.75px;font-size:15.5px;line-height:19.5px;color:#ffad2e;letter-spacing:2.195px;-webkit-text-stroke:0.5px #ffad2e;">Ai</div>
<div class="r" style="left:424px;top:729px;width:54px;height:38px;background:linear-gradient(#95a1c2,#8794b8);box-sizing:border-box;border:1px solid #eef1f8;"></div>
<div class="r" style="left:478px;top:729px;width:5px;height:38px;background:linear-gradient(#8d9abd,#7f8db3);box-sizing:border-box;border:1px solid #eef1f8;border-left:none;"></div>
<svg class="r" style="left:432px;top:731px;" width="36" height="34" viewBox="0 0 36 34"><defs><linearGradient id="swt" x1="0" y1="0" x2="1" y2="1"><stop offset="0" stop-color="#ff6a5a"/><stop offset="1" stop-color="#e02a22"/></linearGradient></defs><path d="M3 8.5 L20 1.5 L33.5 7 L33.5 24.5 L17 32.5 L3 26Z" fill="#c81d1a"/><path d="M3 8.5 L20 1.5 L33.5 7 L17 14.5Z" fill="url(#swt)"/><path d="M17 14.5 L33.5 7 L33.5 24.5 L17 32.5Z" fill="#a91513"/><path d="M3 8.5 L17 14.5 L17 32.5 L3 26Z" fill="#d9231f"/><text x="4.2" y="30.5" font-family="Liberation Sans, sans-serif" font-weight="bold" font-size="19" fill="#fff" transform="skewY(22) translate(0 -6)" textLength="12.5" lengthAdjust="spacingAndGlyphs">S</text><text x="18" y="45" font-family="Liberation Sans, sans-serif" font-weight="bold" font-size="18.5" fill="#fff" transform="skewY(-25) translate(0 -4)" textLength="15" lengthAdjust="spacingAndGlyphs">W</text></svg>
<svg class="r" style="left:1102px;top:746px;" width="10" height="7" viewBox="0 0 10 7"><path d="M1 5.7 L5 1.5 L9 5.7Z" fill="#fff"/></svg>
<svg class="r" style="left:1122px;top:740px;" width="18" height="18" viewBox="0 0 18 18"><path d="M2 1.5 V16.5" stroke="#fff" stroke-width="1.6"/><path d="M3.5 2.8 C6 1.6 8 3.8 10.5 3 C12 2.6 13 2.6 14.2 3.2 L14.2 9.5 C12 8.6 10.5 10 8 10 C6 10 5 9 3.5 9.6Z" fill="#fff"/><circle cx="12" cy="12.3" r="4.6" fill="#e0242b" stroke="#fff" stroke-width="0.6"/><path d="M10 10.3 L14 14.3 M14 10.3 L10 14.3" stroke="#fff" stroke-width="1.5"/></svg>
<svg class="r" style="left:1147px;top:740px;" width="16" height="17" viewBox="0 0 16 17"><path d="M4.4 0.8 L8 3.2 L4.4 5.6 L0.8 3.2Z M11.6 0.8 L15.2 3.2 L11.6 5.6 L8 3.2Z M0.8 8 L4.4 5.6 L8 8 L4.4 10.4Z M15.2 8 L11.6 5.6 L8 8 L11.6 10.4Z M4.4 11.4 L8 9 L11.6 11.4 L8 13.8Z" fill="#fff"/><path d="M4.4 3.2h0M8 8h0" stroke="#3b4f82"/></svg>
<svg class="r" style="left:1170px;top:740px;" width="19" height="18" viewBox="0 0 19 18"><path d="M2.4 1.2 V5 M6 1.2 V5" stroke="#fff" stroke-width="1.5"/><path d="M0.8 5 H7.6 V8.2 Q7.6 10 5.4 10.4 V16.5 H3 V10.4 Q0.8 10 0.8 8.2Z" fill="#fff"/><rect x="10" y="3.4" width="7.4" height="13" rx="1" fill="none" stroke="#fff" stroke-width="1.5"/><rect x="12" y="1.2" width="3.4" height="2" fill="#fff"/><rect x="11.6" y="9" width="4.2" height="6" fill="#fff"/></svg>
<svg class="r" style="left:1194px;top:741px;" width="19" height="17" viewBox="0 0 19 17"><rect x="1" y="11.4" width="2.6" height="4" fill="#9aa3b8"/><rect x="4.8" y="8.6" width="2.6" height="6.8" fill="#9aa3b8"/><rect x="8.6" y="5.4" width="2.6" height="10" fill="#9aa3b8"/><rect x="12.4" y="2" width="2.6" height="13.4" fill="#9aa3b8"/><circle cx="12.4" cy="11.3" r="4.6" fill="#e0242b" stroke="#fff" stroke-width="0.6"/><path d="M10.4 9.3 L14.4 13.3 M14.4 9.3 L10.4 13.3" stroke="#fff" stroke-width="1.5"/></svg>
<svg class="r" style="left:1218px;top:739px;" width="17" height="18" viewBox="0 0 17 18"><path d="M1 6.2 H4.2 L8.6 1.8 V16.2 L4.2 11.8 H1Z" fill="#fff"/><path d="M10.6 6 Q12.2 9 10.6 12 M12.6 4 Q15.2 9 12.6 14 M14.6 2.2 Q18 9 14.6 15.8" fill="none" stroke="#fff" stroke-width="1.1"/></svg>
<div class="t" style="left:1249.00px;top:733.20px;font-size:11.6px;line-height:15.6px;color:#fff;letter-spacing:-0.824px;">ENG</div>
<div class="t" style="left:1253.00px;top:749.50px;font-size:11.6px;line-height:15.6px;color:#fff;letter-spacing:-0.266px;">GA</div>
<div class="t" style="left:1305.00px;top:733.20px;font-size:11.6px;line-height:15.6px;color:#fff;letter-spacing:-0.386px;">13:27</div>
<div class="t" style="left:1289.00px;top:749.50px;font-size:11.6px;line-height:15.6px;color:#fff;letter-spacing:0.051px;">26/04/2015</div>
<svg class="r" style="left:405px;top:111px;" width="18" height="18" viewBox="0 0 18 18"><circle cx="6.8" cy="6.8" r="5.6" fill="#f2f4f8" stroke="#7d8594" stroke-width="1.5"/><path d="M10.8 10.8 L15.6 15.6" stroke="#5b8fd6" stroke-width="2.8" stroke-linecap="round"/><path d="M11 11 L15.2 15.2" stroke="#b8d4f6" stroke-width="0.9" stroke-linecap="round"/><rect x="4.6" y="4.6" width="4.4" height="4.4" fill="#c9ced8" stroke="#7d8594" stroke-width="0.7"/><path d="M6.8 2.4 V4 M6.8 9.6 V11.2 M2.4 6.8 H4 M9.6 6.8 H11.2" stroke="#7d8594" stroke-width="1"/></svg>
<svg class="r" style="left:428px;top:111px;" width="18" height="18" viewBox="0 0 18 18"><circle cx="6.8" cy="6.8" r="5.6" fill="#f2f4f8" stroke="#7d8594" stroke-width="1.5"/><path d="M10.8 10.8 L15.6 15.6" stroke="#5b8fd6" stroke-width="2.8" stroke-linecap="round"/><path d="M11 11 L15.2 15.2" stroke="#b8d4f6" stroke-width="0.9" stroke-linecap="round"/><rect x="1.4" y="2.4" width="9.6" height="7.6" fill="none" stroke="#6d7584" stroke-width="1" stroke-dasharray="2 1.2"/></svg>
<svg class="r" style="left:451px;top:111px;" width="18" height="18" viewBox="0 0 18 18"><path d="M2 3.4 L5.2 1.6 L14.6 12.2 C15.8 14 13 16.6 11.2 15.2Z" fill="#cfe2fa" stroke="#3a70c8" stroke-width="1.1" stroke-linejoin="round"/><path d="M5.4 6.6 L8.6 4.6" stroke="#3a70c8" stroke-width="0.9"/><path d="M9.8 4.4 H16.6 M9.8 4.4 L12.6 2 M9.8 4.4 L12.6 6.8" stroke="#2a62c8" stroke-width="1.5" fill="none"/></svg>
<svg class="r" style="left:475px;top:111px;" width="17" height="18" viewBox="0 0 17 18"><path d="M1.4 3 C3.6 1.2 6 1.2 7.4 3 V16.4 C6 14.8 3.6 14.8 1.4 16.4Z" fill="#f5cf3a" stroke="#8a6a10" stroke-width="0.9"/><path d="M9.6 4 C11.4 2.2 13.6 2.2 15.4 4 V17 C13.6 15.4 11.4 15.4 9.6 17Z" fill="#f5cf3a" stroke="#8a6a10" stroke-width="0.9"/><path d="M7.4 3 C8 1.4 12.6 1 15.4 4 L9.6 4 V17 L7.4 16.4Z" fill="#5b8fd6" stroke="#2a4f9a" stroke-width="0.8"/><path d="M2.6 5 L6 7 M2.6 8 L6 10 M2.6 11 L6 13 M10.8 6 L14.2 8 M10.8 9 L14.2 11 M10.8 12 L14.2 14" stroke="#8a6a10" stroke-width="0.7"/></svg>
<svg class="r" style="left:497px;top:111px;" width="18" height="18" viewBox="0 0 18 18"><path d="M1.4 6 L6 1.6 H16.4 V12 L11.6 16.6 H1.4Z" fill="#fbfcfe" stroke="#5d6472" stroke-width="1"/><path d="M1.4 6 H11.6 V16.6 M11.6 6 L16.4 1.6" fill="none" stroke="#5d6472" stroke-width="0.9"/><rect x="1.9" y="6.5" width="9.2" height="9.6" fill="#8db5ea"/><path d="M2 6.6 L11 16" stroke="#c8dcf6" stroke-width="2"/><path d="M8.6 4 H13 M10.8 2 V6.2 M13.2 10.4 H16 M13.2 10.4 L14.8 9 M13.2 10.4 L14.8 11.8" stroke="#e02020" stroke-width="1"/></svg>
<svg class="r" style="left:520px;top:117px;" width="8" height="6" viewBox="0 0 8 6"><path d="M1.2000000000000002 1.4 H6.8 L4 4.6Z" fill="#4a4d55"/></svg>
<svg class="r" style="left:534px;top:111px;" width="18" height="18" viewBox="0 0 18 18"><path d="M1.4 5.6 L5.6 1.6 H16.6 V12 L12.4 16.4 H1.4Z" fill="#fdfdfe" stroke="#4a505c" stroke-width="1"/><path d="M12.4 5.6 L16.6 1.6 V12 L12.4 16.4Z" fill="#6d9fe0"/><rect x="7" y="5.6" width="5.4" height="10.8" fill="#b5d0f2"/><path d="M1.4 5.6 H12.4 V16.4 M12.4 5.6 L16.6 1.6" fill="none" stroke="#4a505c" stroke-width="0.9"/></svg>
<svg class="r" style="left:557px;top:117px;" width="8" height="6" viewBox="0 0 8 6"><path d="M1.2000000000000002 1.4 H6.8 L4 4.6Z" fill="#4a4d55"/></svg>
<svg class="r" style="left:571px;top:111px;" width="19" height="18" viewBox="0 0 19 18"><circle cx="5" cy="10.6" r="3.4" fill="#eef2f8" stroke="#7a8292" stroke-width="1.3"/><circle cx="13.2" cy="12.4" r="3.4" fill="#eef2f8" stroke="#7a8292" stroke-width="1.3"/><path d="M8.2 10.6 Q9.2 9.8 10 11.2 M2.4 8.2 C3 4.6 5.6 3 7.6 4.6 M16 10 C17.6 7.4 17.6 5.6 15.6 5.2" fill="none" stroke="#7a8292" stroke-width="1.2"/></svg>
<svg class="r" style="left:594px;top:117px;" width="8" height="6" viewBox="0 0 8 6"><path d="M1.2000000000000002 1.4 H6.8 L4 4.6Z" fill="#4a4d55"/></svg>
<svg class="r" style="left:608px;top:111px;" width="18" height="18" viewBox="0 0 18 18"><defs><clipPath id="sp1"><circle cx="9" cy="9" r="8.2"/></clipPath></defs><g clip-path="url(#sp1)"><rect x="0" y="0" width="20" height="20" fill="#e63a3a"/><path d="M0 0 H9.6 V9.6 H0Z" fill="#3a78e0"/><path d="M0 9.6 H9.6 V20 H0Z" fill="#38b84a"/><path d="M9.6 9.6 H20 V20 H9.6Z" fill="#f2c52a"/><ellipse cx="6.4" cy="4.6" rx="3.4" ry="2.2" fill="#fff" opacity=".45"/></g><circle cx="9" cy="9" r="8.2" fill="none" stroke="#6a6f7a" stroke-width="0.5"/></svg>
<svg class="r" style="left:631px;top:111px;" width="18" height="18" viewBox="0 0 18 18"><defs><clipPath id="sp2"><circle cx="9" cy="7" r="6.4"/></clipPath></defs><g clip-path="url(#sp2)"><rect x="0" y="0" width="20" height="20" fill="#e63a3a"/><path d="M0 0 H9.4 V7.4 H0Z" fill="#3a78e0"/><path d="M0 7.4 H9.4 V20 H0Z" fill="#38b84a"/><path d="M9.4 7.4 H20 V20 H9.4Z" fill="#f2c52a"/><ellipse cx="6.8" cy="3.6" rx="3.4" ry="2.2" fill="#fff" opacity=".45"/></g><path d="M0.6 16.8 L3 11.6 H15 L17.4 16.8Z" fill="#f4f4f4" stroke="#333" stroke-width="0.6"/><path d="M3 11.6 H5.4 L4.6 14 H1.9Z M7.8 11.6 H10.2 L10.3 14 H7.3Z M12.6 11.6 H15 L16.1 14 H13.4Z M4.6 14 H7.3 L6.9 16.8 H3.6Z M10.3 14 H13.4 L14.4 16.8 H10.6Z" fill="#222"/></svg>
<svg class="r" style="left:654px;top:117px;" width="8" height="6" viewBox="0 0 8 6"><path d="M1.2000000000000002 1.4 H6.8 L4 4.6Z" fill="#4a4d55"/></svg>
<svg class="r" style="left:668px;top:111px;" width="19" height="18" viewBox="0 0 19 18"><rect x="1" y="2.6" width="14.6" height="10.4" fill="#e6e9ee" stroke="#3f444e" stroke-width="1.2"/><path d="M5 15.6 H11.6 M8.3 13 V15.6" stroke="#3f444e" stroke-width="1.3"/><path d="M2.6 10.4 L6 6.6 L8.6 9 L11.4 5.6" fill="none" stroke="#7a8292" stroke-width="0.9"/><path d="M7.6 4.6 L11 1 L17.6 1.6 L17.8 4.2 L14.4 4.2 L12.4 6.2 L9.6 6.2Z" fill="#e9ba8c" stroke="#8a5a2e" stroke-width="0.7" stroke-linejoin="round"/></svg>
<svg class="r" style="left:691px;top:117px;" width="8" height="6" viewBox="0 0 8 6"><path d="M1.2000000000000002 1.4 H6.8 L4 4.6Z" fill="#4a4d55"/></svg>
<svg class="r" style="left:1246px;top:113px;" width="15" height="15" viewBox="0 0 15 15"><rect x="1" y="1" width="12.6" height="12.6" fill="#fdfdfe" stroke="#6a6f80" stroke-width="1.1"/><rect x="8.2" y="3.6" width="2" height="7.4" fill="none" stroke="#6a6f80" stroke-width="0.9"/><path d="M6.6 4 L3.6 7.3 L6.6 10.6Z" fill="#6a6f80"/></svg>
<svg class="r" style="left:1269px;top:113px;" width="15" height="15" viewBox="0 0 15 15"><rect x="1" y="1" width="12.6" height="12.6" fill="#fdfdfe" stroke="#6a6f80" stroke-width="1.1"/><rect x="4.4" y="3.6" width="2" height="7.4" fill="none" stroke="#6a6f80" stroke-width="0.9"/><path d="M8 4 L11 7.3 L8 10.6Z" fill="#6a6f80"/></svg>
<svg class="r" style="left:1292px;top:121px;" width="15" height="7" viewBox="0 0 15 7"><rect x="1" y="1" width="11.6" height="4.2" fill="#fdfdfe" stroke="#6a6f80" stroke-width="1.1"/></svg>
<svg class="r" style="left:1313px;top:113px;" width="19" height="15" viewBox="0 0 19 15"><rect x="6.4" y="1" width="10.6" height="8.6" fill="#fdfdfe" stroke="#6a6f80" stroke-width="1.1"/><rect x="8.6" y="3.4" width="6.2" height="3.8" fill="none" stroke="#6a6f80" stroke-width="0.9"/><rect x="1" y="5" width="10.6" height="8.6" fill="#fdfdfe" stroke="#6a6f80" stroke-width="1.1"/><rect x="3.2" y="7.6" width="6.2" height="3.6" fill="none" stroke="#6a6f80" stroke-width="0.9"/></svg>
<svg class="r" style="left:1338px;top:114px;" width="16" height="14" viewBox="0 0 16 14"><path d="M1.2 1.2 H4.4 L7.4 4.8 L10.4 1.2 H13.6 L9.2 6.6 L13.8 12.2 H10.6 L7.4 8.4 L4.2 12.2 H1 L5.6 6.6Z" fill="#fdfdfe" stroke="#6a6f80" stroke-width="1.1" stroke-linejoin="round"/></svg>
<div class="r" style="left:1361px;top:106px;width:1px;height:589px;background:#1d2026;"></div>
<div class="r" style="left:1362px;top:106px;width:4px;height:603px;background:linear-gradient(#384456,#4a5668 55%,#667183);"></div>
<div class="r" style="left:1361px;top:695px;width:1px;height:14px;background:#7b8391;"></div>
<div class="r" style="left:1342px;top:165px;width:24px;height:24px;background:#b5b6b9;box-sizing:border-box;border:1px solid #33353a;border-right:none;"></div>
<svg class="r" style="left:1344px;top:167px;" width="21" height="20" viewBox="0 0 21 20"><path d="M3 2.6 H13 V9.6 H7.6 L5 12 V9.6 H3Z" fill="#7db4f0" stroke="#3a70c8" stroke-width="0.8"/><path d="M8 7.6 H17.6 V14 H15.4 V16.4 L12.8 14 H8Z" fill="#8fd850" stroke="#3d8f1f" stroke-width="0.8"/></svg>
<div class="r" style="left:1342px;top:189px;width:24px;height:24px;background:#b5b6b9;box-sizing:border-box;border:1px solid #33353a;border-right:none;"></div>
<svg class="r" style="left:1344px;top:191px;" width="21" height="20" viewBox="0 0 21 20"><path d="M2 10.6 L10 2.6 L18 10.6" fill="none" stroke="#c8900a" stroke-width="2"/><path d="M4.6 10 V17 H15.4 V10 L10 4.8Z" fill="#ffe89a" stroke="#b07f10" stroke-width="0.8"/><rect x="8" y="11" width="4" height="6" fill="#c8900a"/><rect x="13.4" y="3" width="2" height="4" fill="#d03030"/></svg>
<div class="r" style="left:1342px;top:213px;width:24px;height:24px;background:#b5b6b9;box-sizing:border-box;border:1px solid #33353a;border-right:none;"></div>
<svg class="r" style="left:1344px;top:215px;" width="21" height="20" viewBox="0 0 21 20"><path d="M2.4 8 L5.4 6.4 L8 8 V17 H2.4Z" fill="#2da83a" stroke="#106a1a" stroke-width="0.7"/><path d="M6.6 5.6 L9.6 4 L11.8 5.6 V17 H6.6Z" fill="#f0c020" stroke="#8a6a10" stroke-width="0.7"/><path d="M10.6 4 L13.6 1.8 L16.6 4 V17 H10.6Z" fill="#3a78d8" stroke="#1a4a9a" stroke-width="0.7"/><path d="M15 3.4 L17.8 5 V16 H15Z" fill="#d84040" stroke="#8a1a1a" stroke-width="0.6"/></svg>
<div class="r" style="left:1342px;top:237px;width:24px;height:24px;background:#f0f1f4;box-sizing:border-box;border:1px solid #33353a;border-right:none;"></div>
<svg class="r" style="left:1344px;top:239px;" width="21" height="20" viewBox="0 0 21 20"><path d="M2 5 Q2 4 3 4 H7.4 L9 5.8 H15 Q16 5.8 16 6.8 V15.4 H2Z" fill="#e9b23a" stroke="#a8761a" stroke-width="0.8"/><path d="M2 16 L4.6 8.8 H18.8 L15.6 16Z" fill="#ffdf80" stroke="#b07f1a" stroke-width="0.8" stroke-linejoin="round"/></svg>
<div class="r" style="left:1342px;top:261px;width:24px;height:24px;background:#b5b6b9;box-sizing:border-box;border:1px solid #33353a;border-right:none;"></div>
<svg class="r" style="left:1344px;top:263px;" width="21" height="20" viewBox="0 0 21 20"><rect x="3" y="2" width="15" height="11" fill="#f6f8fc" stroke="#3d5a9a" stroke-width="1"/><rect x="4.6" y="3.6" width="5" height="3" fill="#5b8fd6"/><rect x="11" y="3.6" width="5.4" height="3" fill="#5b8fd6"/><path d="M5 10.6 L7 8.4 L9.4 10.6Z" fill="#f0c020" stroke="#8a6a10" stroke-width="0.5"/><rect x="11" y="8.4" width="5.4" height="3" fill="#9ab4e0"/><path d="M3 16.4 H9 M9 16.4 L6.6 14.4 M9 16.4 L6.6 18.4" stroke="#1a2fc0" stroke-width="1.5" fill="none"/></svg>
<div class="r" style="left:1342px;top:285px;width:24px;height:24px;background:#b5b6b9;box-sizing:border-box;border:1px solid #33353a;border-right:none;"></div>
<svg class="r" style="left:1344px;top:287px;" width="21" height="20" viewBox="0 0 21 20"><defs><clipPath id="tps"><circle cx="10.4" cy="10" r="7.6"/></clipPath></defs><g clip-path="url(#tps)"><rect x="0" y="0" width="22" height="22" fill="#e63a3a"/><path d="M0 0 H10.6 V10.4 H0Z" fill="#3a78e0"/><path d="M0 10.4 H12 V22 H0Z" fill="#38b84a"/><path d="M10 12 H22 V22 H8Z" fill="#f2c52a"/><ellipse cx="8" cy="6" rx="3.2" ry="2" fill="#fff" opacity=".5"/></g><ellipse cx="10.4" cy="18.4" rx="6" ry="1.2" fill="#555" opacity=".5"/></svg>
<div class="r" style="left:1342px;top:309px;width:24px;height:24px;background:#b5b6b9;box-sizing:border-box;border:1px solid #33353a;border-right:none;"></div>
<svg class="r" style="left:1344px;top:311px;" width="21" height="20" viewBox="0 0 21 20"><rect x="4" y="6" width="11.6" height="11.6" fill="#f4f4f6" stroke="#50535a" stroke-width="1"/><path d="M6 9.6 H13.6 M6 12 H13.6 M6 14.4 H13.6" stroke="#8c8f99" stroke-width="0.8"/><path d="M7.6 6.6 L11.6 2.8 L18.4 3.6 L18.6 6.4 L15 6.2 L12.6 8.4 L9.8 8.2Z" fill="#e9ba8c" stroke="#8a5a2e" stroke-width="0.7" stroke-linejoin="round"/></svg>
<div class="r" style="left:1342px;top:333px;width:24px;height:1px;background:#33353a;"></div>
<div class="r" style="left:285px;top:380px;width:9px;height:39px;background:#e4e6eb;box-sizing:border-box;border:1.5px solid #17181b;border-left:none;"></div>
<svg class="r" style="left:286px;top:384px;" width="7" height="32" viewBox="0 0 7 32"><path d="M5 4.2 L2 6.5 L5 8.8Z M5 13.2 L2 15.5 L5 17.8Z M5 22.2 L2 24.5 L5 26.8Z" fill="#2a2c33"/></svg>
</body></html>
